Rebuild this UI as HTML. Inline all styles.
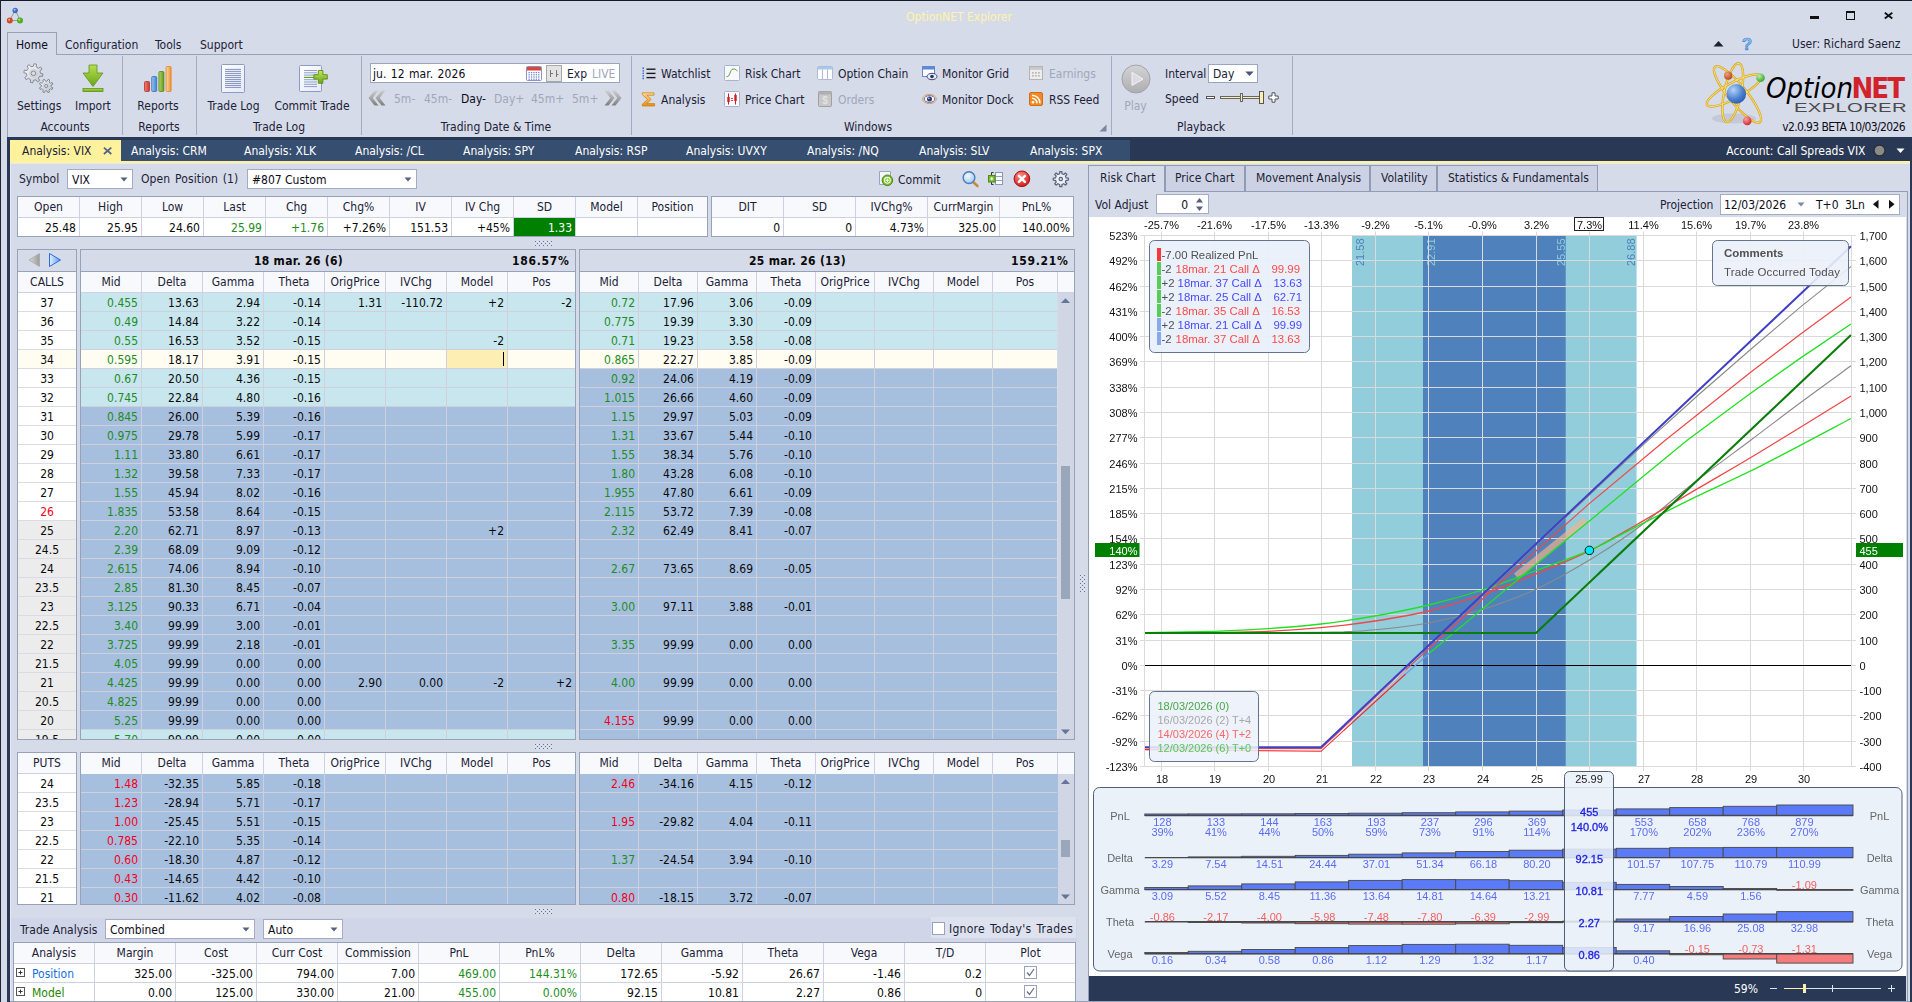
<!DOCTYPE html>
<html lang="en"><head><meta charset="utf-8"><title>OptionNET Explorer</title><style>
html,body{margin:0;padding:0;}
body{width:1912px;height:1002px;overflow:hidden;background:#d6dbe9;position:relative;font-family:"DejaVu Sans Condensed","Liberation Sans",sans-serif;font-size:12px;color:#1b2236;}
#app{position:absolute;left:0;top:0;width:1912px;height:1002px;overflow:hidden;background:#d6dbe9;}
.b{position:absolute;display:block;}
.t{position:absolute;white-space:pre;display:block;}
svg{overflow:visible;}
#frame{position:absolute;left:0;top:0;width:1911px;height:1001px;border-top:1px solid #151a26;border-left:1px solid #1d2435;pointer-events:none;}
</style></head><body><div id="app">
<span class="t" style="left:809px;width:300px;text-align:center;top:10px;line-height:14px;color:#fff3a8;">OptionNET Explorer</span>
<svg class="b" style="left:6px;top:7px" width="18" height="18" viewBox="0 0 18 18"><line x1="9.2" y1="3" x2="4" y2="13" stroke="#888" stroke-width="0.8"/><line x1="9.2" y1="3" x2="14" y2="13" stroke="#888" stroke-width="0.8"/><line x1="4" y1="13.5" x2="14" y2="13.5" stroke="#888" stroke-width="0.8"/>
<circle cx="9.2" cy="3.5" r="2.7" fill="#3f6fc4"/><circle cx="8.6" cy="2.8" r="1" fill="#a9c4f0"/>
<circle cx="3.8" cy="13.6" r="3" fill="#cf4b26"/><circle cx="3.1" cy="12.7" r="1" fill="#f0a890"/>
<circle cx="14" cy="13.6" r="3" fill="#4fae22"/><circle cx="13.3" cy="12.7" r="1" fill="#b4e890"/></svg>
<div class="b" style="left:1810px;top:16px;width:9px;height:3.4px;background:#111;"></div>
<div class="b" style="left:1846px;top:11px;width:9px;height:9px;border:1px solid #111;border-top:2px solid #111;box-sizing:border-box;"></div>
<svg class="b" style="left:1884px;top:11px" width="10" height="10" viewBox="0 0 10 10"><path d="M0.8 1.8 L8.3 7.6 M8.3 1.8 L0.8 7.6" stroke="#111" stroke-width="1.9" fill="none"/></svg>
<div class="b" style="left:7px;top:54px;width:1905px;height:1px;background:#97a2bb;"></div>
<div class="b" style="left:7px;top:32px;width:50px;height:23px;border:1px solid #97a2bb;border-bottom:none;box-sizing:border-box;background:#d6dbe9;"></div>
<span class="t" style="left:16px;top:38px;line-height:14px;color:#0c0c18;">Home</span>
<span class="t" style="left:65px;top:38px;line-height:14px;color:#1b2236;">Configuration</span>
<span class="t" style="left:155px;top:38px;line-height:14px;color:#1b2236;">Tools</span>
<span class="t" style="left:200px;top:38px;line-height:14px;color:#1b2236;">Support</span>
<div class="b" style="left:7px;top:55px;width:1px;height:82px;background:#97a2bb;"></div>
<svg class="b" style="left:1713px;top:40px" width="11" height="7" viewBox="0 0 11 7"><path d="M0.5 6.5 L5.5 1 L10.5 6.5 Z" fill="#1b2236"/></svg>
<svg class="b" style="left:1740px;top:35px" width="14" height="18" viewBox="0 0 14 18"><defs><linearGradient id="gq" x1="0" y1="0" x2="0" y2="1"><stop offset="0" stop-color="#a8d4fa"/><stop offset="1" stop-color="#4a94e0"/></linearGradient></defs><text x="7" y="15" font-size="17" font-weight="bold" text-anchor="middle" fill="url(#gq)" stroke="#3f86d2" stroke-width="0.6" font-family="Liberation Sans, sans-serif">?</text></svg>
<span class="t" style="left:1792px;top:37px;line-height:14px;color:#1b2236;">User: Richard Saenz</span>
<div class="b" style="left:122px;top:56px;width:1px;height:79px;background:#a3abc2;"></div>
<div class="b" style="left:196px;top:56px;width:1px;height:79px;background:#a3abc2;"></div>
<div class="b" style="left:361px;top:56px;width:1px;height:79px;background:#a3abc2;"></div>
<div class="b" style="left:631px;top:56px;width:1px;height:79px;background:#a3abc2;"></div>
<div class="b" style="left:1111px;top:56px;width:1px;height:79px;background:#a3abc2;"></div>
<div class="b" style="left:1292px;top:56px;width:1px;height:79px;background:#a3abc2;"></div>
<svg class="b" style="left:21px;top:61px" width="36" height="36" viewBox="0 0 36 36"><defs><linearGradient id="gg" x1="0" y1="0" x2="1" y2="1"><stop offset="0" stop-color="#ffffff"/><stop offset="1" stop-color="#bfc3cc"/></linearGradient></defs><path d="M19.40 12.22 L21.98 12.94 L21.47 15.44 L18.81 15.10 L17.41 17.19 L18.72 19.52 L16.59 20.94 L14.95 18.82 L12.48 19.30 L11.76 21.88 L9.26 21.37 L9.60 18.71 L7.51 17.31 L5.18 18.62 L3.76 16.49 L5.88 14.85 L5.40 12.38 L2.82 11.66 L3.33 9.16 L5.99 9.50 L7.39 7.41 L6.08 5.08 L8.21 3.66 L9.85 5.78 L12.32 5.30 L13.04 2.72 L15.54 3.23 L15.20 5.89 L17.29 7.29 L19.62 5.98 L21.04 8.11 L18.92 9.75 Z" fill="url(#gg)" stroke="#7d828e" stroke-width="0.9" stroke-linejoin="round"/><circle cx="12.4" cy="12.3" r="3.9" fill="none" stroke="#c9ccd4" stroke-width="1"/><circle cx="12.4" cy="12.3" r="2.3" fill="#d6dbe9" stroke="#7d828e" stroke-width="0.9"/><path d="M30.01 25.92 L31.86 26.82 L31.14 28.51 L29.21 27.82 L27.96 29.05 L28.62 30.99 L26.92 31.68 L26.05 29.83 L24.28 29.81 L23.38 31.66 L21.69 30.94 L22.38 29.01 L21.15 27.76 L19.21 28.42 L18.52 26.72 L20.37 25.85 L20.39 24.08 L18.54 23.18 L19.26 21.49 L21.19 22.18 L22.44 20.95 L21.78 19.01 L23.48 18.32 L24.35 20.17 L26.12 20.19 L27.02 18.34 L28.71 19.06 L28.02 20.99 L29.25 22.24 L31.19 21.58 L31.88 23.28 L30.03 24.15 Z" fill="url(#gg)" stroke="#7d828e" stroke-width="0.9" stroke-linejoin="round"/><circle cx="25.2" cy="25.0" r="3.2" fill="none" stroke="#c9ccd4" stroke-width="1"/><circle cx="25.2" cy="25.0" r="1.6" fill="#d6dbe9" stroke="#7d828e" stroke-width="0.9"/></svg>
<span class="t" style="left:17px;top:99px;line-height:14px;color:#1b2236;">Settings</span>
<svg class="b" style="left:81px;top:63px" width="24" height="31" viewBox="0 0 24 31"><defs><linearGradient id="ga" x1="0" y1="0" x2="0" y2="1"><stop offset="0" stop-color="#b5e04a"/><stop offset="1" stop-color="#6aa51a"/></linearGradient></defs>
<path d="M8 2 H16 V10 H22 L12 23.5 L2 10 H8 Z" fill="url(#ga)" stroke="#5e9414" stroke-width="0.8"/><rect x="2" y="25.5" width="20" height="3" fill="url(#ga)" stroke="#5e9414" stroke-width="0.8"/></svg>
<span class="t" style="left:75px;top:99px;line-height:14px;color:#1b2236;">Import</span>
<span class="t" style="left:-85px;width:300px;text-align:center;top:120px;line-height:14px;color:#1b2236;">Accounts</span>
<svg class="b" style="left:142px;top:64px" width="30" height="30" viewBox="0 0 30 30"><defs>
<linearGradient id="b1" x1="0" x2="1"><stop offset="0" stop-color="#f08070"/><stop offset="1" stop-color="#c83a30"/></linearGradient>
<linearGradient id="b2" x1="0" x2="1"><stop offset="0" stop-color="#9cc8f4"/><stop offset="1" stop-color="#3f7fcf"/></linearGradient>
<linearGradient id="b3" x1="0" x2="1"><stop offset="0" stop-color="#b4d860"/><stop offset="1" stop-color="#5f961c"/></linearGradient>
<linearGradient id="b4" x1="0" x2="1"><stop offset="0" stop-color="#ffd9a0"/><stop offset="1" stop-color="#f09030"/></linearGradient></defs>
<rect x="2.5" y="17.5" width="5" height="10" rx="1" fill="url(#b1)" stroke="#b83228" stroke-width="0.8"/>
<rect x="9.7" y="12.5" width="5" height="15" rx="1" fill="url(#b2)" stroke="#3a70b8" stroke-width="0.8"/>
<rect x="16.9" y="7.5" width="5" height="20" rx="1" fill="url(#b3)" stroke="#56881a" stroke-width="0.8"/>
<rect x="24.1" y="2.5" width="5" height="25" rx="1" fill="url(#b4)" stroke="#e08428" stroke-width="0.8"/></svg>
<span class="t" style="left:8px;width:300px;text-align:center;top:99px;line-height:14px;color:#1b2236;">Reports</span>
<span class="t" style="left:9px;width:300px;text-align:center;top:120px;line-height:14px;color:#1b2236;">Reports</span>
<svg class="b" style="left:220px;top:63px" width="26" height="31" viewBox="0 0 26 31"><defs><linearGradient id="gpg2" x1="0" y1="0" x2="1" y2="1"><stop offset="0" stop-color="#ffffff"/><stop offset="1" stop-color="#e4e9f5"/></linearGradient></defs><rect x="1.5" y="1.5" width="23" height="28" rx="1" fill="url(#gpg2)" stroke="#8c9ac8" stroke-width="1"/><line x1="5" x2="21" y1="6.4" y2="6.4" stroke="#7484b8" stroke-width="0.9"/><line x1="5" x2="21" y1="8.4" y2="8.4" stroke="#7484b8" stroke-width="0.9"/><line x1="5" x2="21" y1="10.4" y2="10.4" stroke="#7484b8" stroke-width="0.9"/><line x1="5" x2="21" y1="12.4" y2="12.4" stroke="#7484b8" stroke-width="0.9"/><line x1="5" x2="21" y1="14.4" y2="14.4" stroke="#7484b8" stroke-width="0.9"/><line x1="5" x2="21" y1="16.4" y2="16.4" stroke="#7484b8" stroke-width="0.9"/><line x1="5" x2="21" y1="18.4" y2="18.4" stroke="#7484b8" stroke-width="0.9"/><line x1="5" x2="21" y1="20.4" y2="20.4" stroke="#7484b8" stroke-width="0.9"/><line x1="5" x2="21" y1="22.4" y2="22.4" stroke="#7484b8" stroke-width="0.9"/><line x1="5" x2="21" y1="24.4" y2="24.4" stroke="#7484b8" stroke-width="0.9"/></svg>
<span class="t" style="left:83.5px;width:300px;text-align:center;top:99px;line-height:14px;color:#1b2236;">Trade Log</span>
<svg class="b" style="left:296px;top:63px" width="34" height="31" viewBox="0 0 34 31"><defs><linearGradient id="gpg" x1="0" y1="0" x2="1" y2="1"><stop offset="0" stop-color="#ffffff"/><stop offset="1" stop-color="#e4e9f5"/></linearGradient><linearGradient id="gpl" x1="0" y1="0" x2="0" y2="1"><stop offset="0" stop-color="#c4e860"/><stop offset="1" stop-color="#68a418"/></linearGradient></defs><rect x="3.5" y="2.5" width="22" height="26" rx="1" fill="url(#gpg)" stroke="#8c9ac8" stroke-width="1"/><line x1="8" x2="21" y1="7.5" y2="7.5" stroke="#8494c4" stroke-width="0.9"/><line x1="8" x2="21" y1="9.8" y2="9.8" stroke="#8494c4" stroke-width="0.9"/><line x1="8" x2="21" y1="12.1" y2="12.1" stroke="#8494c4" stroke-width="0.9"/><line x1="8" x2="21" y1="16.7" y2="16.7" stroke="#8494c4" stroke-width="0.9"/><line x1="8" x2="21" y1="19.0" y2="19.0" stroke="#8494c4" stroke-width="0.9"/><line x1="8" x2="21" y1="21.3" y2="21.3" stroke="#8494c4" stroke-width="0.9"/><line x1="8" x2="21" y1="23.6" y2="23.6" stroke="#8494c4" stroke-width="0.9"/><line x1="8" x2="18" y1="14.4" y2="14.4" stroke="#58a010" stroke-width="1.1"/><path d="M22.3 7.5 h4.6 v4.2 h4.4 v4.4 h-4.4 v4.2 h-4.6 v-4.2 h-4.4 v-4.4 h4.4 z" fill="url(#gpl)" stroke="#5a9010" stroke-width="0.9" stroke-linejoin="round"/></svg>
<span class="t" style="left:162px;width:300px;text-align:center;top:99px;line-height:14px;color:#1b2236;">Commit Trade</span>
<span class="t" style="left:129px;width:300px;text-align:center;top:120px;line-height:14px;color:#1b2236;">Trade Log</span>
<div class="b" style="left:370px;top:63px;width:250px;height:20px;background:#fff;border:1px solid #9aa5c0;box-sizing:border-box;"></div>
<span class="t" style="left:373px;top:67px;line-height:14px;color:#0c0c18;word-spacing:0.8px;letter-spacing:0.08px;">ju. 12 mar. 2026</span>
<svg class="b" style="left:526px;top:66px" width="16" height="15" viewBox="0 0 16 15"><rect x="0.5" y="0.5" width="15" height="14" rx="1" fill="#fff" stroke="#8a96c0" stroke-width="1"/><rect x="1" y="1" width="14" height="3.5" fill="#d8473a"/>
<rect x="2.5" y="6.0" width="1.3" height="1.2" fill="#6b7fd0"/><rect x="4.9" y="6.0" width="1.3" height="1.2" fill="#6b7fd0"/><rect x="7.3" y="6.0" width="1.3" height="1.2" fill="#6b7fd0"/><rect x="9.7" y="6.0" width="1.3" height="1.2" fill="#6b7fd0"/><rect x="12.1" y="6.0" width="1.3" height="1.2" fill="#6b7fd0"/><rect x="2.5" y="8.2" width="1.3" height="1.2" fill="#6b7fd0"/><rect x="4.9" y="8.2" width="1.3" height="1.2" fill="#6b7fd0"/><rect x="7.3" y="8.2" width="1.3" height="1.2" fill="#6b7fd0"/><rect x="9.7" y="8.2" width="1.3" height="1.2" fill="#6b7fd0"/><rect x="12.1" y="8.2" width="1.3" height="1.2" fill="#6b7fd0"/><rect x="2.5" y="10.4" width="1.3" height="1.2" fill="#6b7fd0"/><rect x="4.9" y="10.4" width="1.3" height="1.2" fill="#6b7fd0"/><rect x="7.3" y="10.4" width="1.3" height="1.2" fill="#6b7fd0"/><rect x="9.7" y="10.4" width="1.3" height="1.2" fill="#6b7fd0"/><rect x="12.1" y="10.4" width="1.3" height="1.2" fill="#6b7fd0"/><rect x="2.5" y="12.6" width="1.3" height="1.2" fill="#6b7fd0"/><rect x="4.9" y="12.6" width="1.3" height="1.2" fill="#6b7fd0"/><rect x="7.3" y="12.6" width="1.3" height="1.2" fill="#6b7fd0"/><rect x="9.7" y="12.6" width="1.3" height="1.2" fill="#6b7fd0"/><rect x="12.1" y="12.6" width="1.3" height="1.2" fill="#6b7fd0"/></svg>
<div class="b" style="left:546px;top:65px;width:16px;height:17px;background:#e3e3e3;border:1px solid #a8a8a8;box-sizing:border-box;"></div>
<svg class="b" style="left:546px;top:65px" width="16" height="17" viewBox="0 0 16 17"><path d="M4.5 5 V12 M4.5 8.5 H7 M10.5 5 V12 M10.5 9.5 H12.5" stroke="#777" stroke-width="1" fill="none"/></svg>
<span class="t" style="left:567px;top:67px;line-height:14px;color:#1b2236;">Exp</span>
<span class="t" style="left:592px;top:67px;line-height:14px;color:#a0a7ba;">LIVE</span>
<svg class="b" style="left:368px;top:89px" width="18" height="18" viewBox="0 0 18 18"><defs><linearGradient id="gc" x1="0" y1="0" x2="0" y2="1"><stop offset="0" stop-color="#cfcfcf"/><stop offset="1" stop-color="#7f7f7f"/></linearGradient></defs><path d="M6.5 1.5 L0.5 9 L6.5 16.5 L10.5 16.5 L4.7 9 L10.5 1.5 Z M13.5 1.5 L7.5 9 L13.5 16.5 L17.5 16.5 L11.7 9 L17.5 1.5 Z" fill="url(#gc)"/></svg>
<svg class="b" style="left:604px;top:89px" width="18" height="18" viewBox="0 0 18 18"><path d="M11.5 1.5 L17.5 9 L11.5 16.5 L7.5 16.5 L13.3 9 L7.5 1.5 Z M4.5 1.5 L10.5 9 L4.5 16.5 L0.5 16.5 L6.3 9 L0.5 1.5 Z" fill="url(#gc)"/></svg>
<span class="t" style="left:394px;top:92px;line-height:14px;color:#a0a7ba;">5m-</span>
<span class="t" style="left:424px;top:92px;line-height:14px;color:#a0a7ba;">45m-</span>
<span class="t" style="left:461px;top:92px;line-height:14px;color:#0c0c18;">Day-</span>
<span class="t" style="left:494px;top:92px;line-height:14px;color:#a0a7ba;">Day+</span>
<span class="t" style="left:531px;top:92px;line-height:14px;color:#a0a7ba;">45m+</span>
<span class="t" style="left:572px;top:92px;line-height:14px;color:#a0a7ba;">5m+</span>
<span class="t" style="left:346px;width:300px;text-align:center;top:120px;line-height:14px;color:#1b2236;">Trading Date &amp; Time</span>
<svg class="b" style="left:641px;top:67px" width="16" height="13" viewBox="0 0 16 13"><circle cx="2.2" cy="1.2" r="0.85" fill="#3a6cd0"/><circle cx="2.2" cy="3.8" r="0.85" fill="#3a6cd0"/><circle cx="2.2" cy="6.3" r="0.85" fill="#3a6cd0"/><circle cx="2.2" cy="8.8" r="0.85" fill="#3a6cd0"/><circle cx="2.2" cy="11.4" r="0.85" fill="#3a6cd0"/><line x1="5.5" x2="14.5" y1="2.2" y2="2.2" stroke="#1a1a1a" stroke-width="1.4"/><line x1="5.5" x2="14.5" y1="6.4" y2="6.4" stroke="#1a1a1a" stroke-width="1.4"/><line x1="5.5" x2="14.5" y1="10.6" y2="10.6" stroke="#1a1a1a" stroke-width="1.4"/></svg>
<span class="t" style="left:661px;top:67px;line-height:14px;color:#1b2236;">Watchlist</span>
<svg class="b" style="left:641px;top:91px" width="16" height="17" viewBox="0 0 16 17"><defs><linearGradient id="gs" x1="0" y1="0" x2="0" y2="1"><stop offset="0" stop-color="#ffd890"/><stop offset="0.55" stop-color="#f8b040"/><stop offset="1" stop-color="#e88c18"/></linearGradient></defs><path d="M1.3 1.8 H13 V4.2 H5.8 L10.2 8.4 L5.8 12.6 H13.6 V15 H1.3 V13.2 L6.6 8.4 L1.3 3.6 Z" fill="url(#gs)" stroke="#cc7c14" stroke-width="0.7"/></svg>
<span class="t" style="left:661px;top:93px;line-height:14px;color:#1b2236;">Analysis</span>
<svg class="b" style="left:724px;top:65px" width="16" height="16" viewBox="0 0 16 16"><rect x="0.5" y="0.5" width="15" height="15" rx="1" fill="#f8f9fd" stroke="#a8b2d0"/><path d="M2.5 11.5 C6 13 6 4 9 4 S 12 5 13.5 6" stroke="#5a9a30" stroke-width="1" fill="none"/></svg>
<span class="t" style="left:745px;top:67px;line-height:14px;color:#1b2236;">Risk Chart</span>
<svg class="b" style="left:724px;top:91px" width="16" height="16" viewBox="0 0 16 16"><rect x="0.5" y="0.5" width="15" height="15" rx="1" fill="#f8f9fd" stroke="#a8b2d0"/><path d="M4.5 2.5 V13.5 M11.5 2.5 V13.5" stroke="#c02020" stroke-width="1"/><rect x="3.3" y="6" width="2.4" height="5" fill="#d02020"/><rect x="10.3" y="4" width="2.4" height="6" fill="#d02020"/><path d="M7 7.5 h2 M7 9.5 h2" stroke="#c02020" stroke-width="0.8"/></svg>
<span class="t" style="left:745px;top:93px;line-height:14px;color:#1b2236;">Price Chart</span>
<svg class="b" style="left:817px;top:66px" width="16" height="15" viewBox="0 0 16 15"><rect x="0.5" y="0.5" width="15" height="13" rx="1" fill="#fdfdff" stroke="#b0bad8"/><rect x="1" y="1" width="14" height="2.5" fill="#a8c8ee"/><path d="M5.5 3.5 V13 M10.5 3.5 V13" stroke="#b0bad8"/></svg>
<span class="t" style="left:838px;top:67px;line-height:14px;color:#1b2236;">Option Chain</span>
<svg class="b" style="left:818px;top:91px" width="14" height="16" viewBox="0 0 14 16"><rect x="0.5" y="0.5" width="13" height="15" rx="1" fill="#c8c8c8" stroke="#a0a0a0"/><rect x="0.5" y="0.5" width="13" height="3" fill="#b0b0b0"/><text x="7" y="12.8" font-size="10" font-weight="bold" text-anchor="middle" fill="#e2e2e2" font-family="Liberation Sans, sans-serif">$</text></svg>
<span class="t" style="left:838px;top:93px;line-height:14px;color:#a0a7ba;">Orders</span>
<svg class="b" style="left:922px;top:66px" width="16" height="15" viewBox="0 0 16 15"><rect x="0.5" y="0.5" width="12" height="10" fill="#fdfdff" stroke="#6a88c8"/><rect x="1" y="1" width="11" height="2.5" fill="#5a8ad8"/><ellipse cx="10" cy="10.5" rx="5" ry="3.2" fill="#e8ecf8" stroke="#333a60" stroke-width="0.9"/><circle cx="10" cy="10.5" r="1.8" fill="#28346a"/></svg>
<span class="t" style="left:942px;top:67px;line-height:14px;color:#1b2236;">Monitor Grid</span>
<svg class="b" style="left:922px;top:93px" width="16" height="12" viewBox="0 0 16 12"><ellipse cx="7.5" cy="6" rx="6.8" ry="4.6" fill="#eef0f8" stroke="#d89050" stroke-width="0.9"/><ellipse cx="7.5" cy="6" rx="5.4" ry="3.4" fill="#f6f7fb" stroke="#50588a" stroke-width="0.9"/><circle cx="7.5" cy="6" r="2.5" fill="#303c70"/><circle cx="6.8" cy="5.2" r="0.8" fill="#c8d0f0"/></svg>
<span class="t" style="left:942px;top:93px;line-height:14px;color:#1b2236;">Monitor Dock</span>
<svg class="b" style="left:1029px;top:66px" width="15" height="15" viewBox="0 0 15 15"><rect x="0.5" y="0.5" width="13" height="13" fill="#ededed" stroke="#b4b4b4"/><rect x="1" y="1" width="12" height="2.8" fill="#c8c8c8"/><rect x="3" y="6" width="1.8" height="1.6" fill="#b8b8b8"/><rect x="6" y="6" width="1.8" height="1.6" fill="#b8b8b8"/><rect x="9" y="6" width="1.8" height="1.6" fill="#b8b8b8"/><rect x="3" y="9" width="1.8" height="1.6" fill="#b8b8b8"/><rect x="6" y="9" width="1.8" height="1.6" fill="#b8b8b8"/><rect x="9" y="9" width="1.8" height="1.6" fill="#b8b8b8"/></svg>
<span class="t" style="left:1049px;top:67px;line-height:14px;color:#a0a7ba;">Earnings</span>
<svg class="b" style="left:1029px;top:92px" width="15" height="15" viewBox="0 0 15 15"><rect x="0.5" y="0.5" width="13" height="13" rx="1.5" fill="#f08a24" stroke="#d86c10"/><circle cx="4" cy="10.3" r="1.3" fill="#fff"/><path d="M3 6.2 A5 5 0 0 1 8 11.2 M3 3.2 A8 8 0 0 1 11 11.2" stroke="#fff" stroke-width="1.5" fill="none"/></svg>
<span class="t" style="left:1049px;top:93px;line-height:14px;color:#1b2236;">RSS Feed</span>
<span class="t" style="left:718px;width:300px;text-align:center;top:120px;line-height:14px;color:#1b2236;">Windows</span>
<svg class="b" style="left:1099px;top:124px" width="8" height="8" viewBox="0 0 8 8"><path d="M7.5 0.5 V7.5 H0.5 Z" fill="#7a86a4"/></svg>
<svg class="b" style="left:1121px;top:64px" width="30" height="30" viewBox="0 0 30 30"><defs><linearGradient id="gp" x1="0" y1="0" x2="0" y2="1"><stop offset="0" stop-color="#d4d4d6"/><stop offset="1" stop-color="#aeaeb2"/></linearGradient></defs><circle cx="15" cy="15" r="14" fill="url(#gp)" stroke="#a2a2a8"/><path d="M11 8.5 L22 15 L11 21.5 Z" fill="#dcdcde" stroke="#f4f4f4" stroke-width="1"/></svg>
<span class="t" style="left:985.5px;width:300px;text-align:center;top:99px;line-height:14px;color:#a0a7ba;">Play</span>
<span class="t" style="left:1165px;top:67px;line-height:14px;color:#1b2236;">Interval</span>
<div class="b" style="left:1208px;top:64px;width:50px;height:19px;background:#fff;border:1px solid #9aa5c0;box-sizing:border-box;"></div>
<span class="t" style="left:1213px;top:67px;line-height:14px;color:#1b2236;">Day</span>
<svg class="b" style="left:1245px;top:71px" width="10" height="6" viewBox="0 0 10 6"><path d="M0.3 0.5 H8.7 L4.5 5 Z" fill="#4a5678"/></svg>
<span class="t" style="left:1165px;top:92px;line-height:14px;color:#1b2236;">Speed</span>
<div class="b" style="left:1206px;top:96px;width:9px;height:3px;background:#fff;border:1px solid #555;box-sizing:border-box;"></div>
<div class="b" style="left:1220px;top:96px;width:41px;height:3px;background:#fbefb0;border:1px solid #666;box-sizing:border-box;"></div>
<div class="b" style="left:1240px;top:93px;width:3px;height:9px;background:#fbefb0;border:1px solid #666;box-sizing:border-box;"></div>
<div class="b" style="left:1259px;top:91px;width:5px;height:13px;background:#fbefb0;border:1px solid #555;box-sizing:border-box;"></div>
<svg class="b" style="left:1268px;top:92px" width="12" height="12" viewBox="0 0 12 12"><path d="M4 0.8 H7 V4 H10.2 V7 H7 V10.2 H4 V7 H0.8 V4 H4 Z" fill="#fff" stroke="#444" stroke-width="0.9"/></svg>
<span class="t" style="left:1051px;width:300px;text-align:center;top:120px;line-height:14px;color:#1b2236;">Playback</span>
<svg class="b" style="left:1700px;top:58px" width="70" height="76" viewBox="0 0 70 76"><defs>
<radialGradient id="lb" cx="0.35" cy="0.3" r="0.8"><stop offset="0" stop-color="#b4d4fa"/><stop offset="0.6" stop-color="#4a7fd0"/><stop offset="1" stop-color="#2a55a8"/></radialGradient>
<radialGradient id="lr" cx="0.35" cy="0.3" r="0.8"><stop offset="0" stop-color="#f8a0a0"/><stop offset="1" stop-color="#d01828"/></radialGradient>
<radialGradient id="lg" cx="0.35" cy="0.3" r="0.8"><stop offset="0" stop-color="#b8f0a0"/><stop offset="1" stop-color="#2e9a1a"/></radialGradient>
<radialGradient id="lo" cx="0.35" cy="0.3" r="0.8"><stop offset="0" stop-color="#f0a080"/><stop offset="1" stop-color="#b04010"/></radialGradient>
</defs>
<ellipse cx="34" cy="60.5" rx="22" ry="5" fill="#b4b8c6" opacity="0.5"/>
<g fill="none" stroke="#d9a81e" stroke-width="2.4">
<ellipse cx="37.5" cy="36.4" rx="35.6" ry="9" transform="rotate(50.8 37.5 36.4)"/>
<ellipse cx="32.75" cy="34.7" rx="30" ry="8.5" transform="rotate(102 32.75 34.7)"/>
<ellipse cx="34" cy="32.4" rx="30.6" ry="8" transform="rotate(-28 34 32.4)"/>
</g>
<g fill="none" stroke="#f7e27e" stroke-width="0.9">
<ellipse cx="37.5" cy="36.4" rx="35.6" ry="9" transform="rotate(50.8 37.5 36.4)"/>
<ellipse cx="32.75" cy="34.7" rx="30" ry="8.5" transform="rotate(102 32.75 34.7)"/>
<ellipse cx="34" cy="32.4" rx="30.6" ry="8" transform="rotate(-28 34 32.4)"/>
</g>
<circle cx="36.3" cy="35.9" r="9.8" fill="url(#lb)"/>
<circle cx="28.2" cy="17.7" r="4.1" fill="url(#lo)"/>
<circle cx="60.5" cy="19.8" r="4.3" fill="url(#lg)"/>
<circle cx="47.2" cy="62.9" r="4.3" fill="url(#lr)"/></svg>
<span class="t" style="left:1766px;top:69.5px;line-height:36px;font-family:'DejaVu Sans Condensed','Liberation Sans',sans-serif;font-size:29px;font-style:italic;color:#000;letter-spacing:0px">Option</span>
<span class="t" style="left:1851.5px;top:69.5px;line-height:36px;font-family:'DejaVu Sans Condensed','Liberation Sans',sans-serif;font-size:29px;font-weight:bold;color:#d2232a;letter-spacing:-2px">NET</span>
<span class="t" style="left:1794px;top:101px;line-height:14px;font-family:'Liberation Sans',sans-serif;font-size:12.5px;color:#4a4a4a;transform:scaleX(1.62);transform-origin:0 0;letter-spacing:0.2px">EXPLORER</span>
<span class="t" style="right:7px;top:120px;line-height:14px;color:#0c0c18;letter-spacing:-0.62px;">v2.0.93 BETA 10/03/2026</span>
<div class="b" style="left:7px;top:137px;width:1905px;height:27px;background:#293955;"></div>
<div class="b" style="left:10px;top:140px;width:1120px;height:21px;background:#364e6f;"></div>
<div class="b" style="left:10px;top:140px;width:111px;height:21px;background:#fff29d;"></div>
<div class="b" style="left:10px;top:161px;width:1900px;height:2px;background:#fff29d;"></div>
<span class="t" style="left:22px;top:144px;line-height:14px;color:#1b2236;">Analysis: VIX</span>
<svg class="b" style="left:103px;top:146px" width="10" height="10" viewBox="0 0 10 10"><path d="M0.9 1.6 L8.3 8.0 M8.3 1.6 L0.9 8.0" stroke="#55648a" stroke-width="1.8"/></svg>
<span class="t" style="left:131px;top:144px;line-height:14px;color:#fff;">Analysis: CRM</span>
<span class="t" style="left:244px;top:144px;line-height:14px;color:#fff;">Analysis: XLK</span>
<span class="t" style="left:355px;top:144px;line-height:14px;color:#fff;">Analysis: /CL</span>
<span class="t" style="left:463px;top:144px;line-height:14px;color:#fff;">Analysis: SPY</span>
<span class="t" style="left:575px;top:144px;line-height:14px;color:#fff;">Analysis: RSP</span>
<span class="t" style="left:686px;top:144px;line-height:14px;color:#fff;">Analysis: UVXY</span>
<span class="t" style="left:807px;top:144px;line-height:14px;color:#fff;">Analysis: /NQ</span>
<span class="t" style="left:919px;top:144px;line-height:14px;color:#fff;">Analysis: SLV</span>
<span class="t" style="left:1030px;top:144px;line-height:14px;color:#fff;">Analysis: SPX</span>
<span class="t" style="right:46.5px;top:144px;line-height:14px;color:#fff;">Account: Call Spreads VIX</span>
<svg class="b" style="left:1873px;top:144px" width="13" height="13" viewBox="0 0 13 13"><circle cx="6.5" cy="6.5" r="5.4" fill="#8a8a8a" stroke="#2a2a2a" stroke-width="1.1"/></svg>
<svg class="b" style="left:1896px;top:148px" width="10" height="6" viewBox="0 0 10 6"><path d="M0.5 0.5 H8.5 L4.5 5 Z" fill="#fff"/></svg>
<div class="b" style="left:10px;top:163px;width:1900px;height:1px;background:#e6e9f2;"></div>
<div class="b" style="left:10px;top:163px;width:1px;height:839px;background:#e6e9f2;"></div>
<div class="b" style="left:7px;top:163px;width:3px;height:839px;background:#293955;"></div>
<div class="b" style="left:1910px;top:163px;width:2px;height:839px;background:#293955;"></div>
<span class="t" style="left:19px;top:172px;line-height:14px;color:#1b2236;">Symbol</span>
<div class="b" style="left:67px;top:169px;width:66px;height:20px;background:#fff;border:1px solid #a3acc4;box-sizing:border-box;"></div>
<span class="t" style="left:72px;top:173px;line-height:14px;color:#0c0c18;">VIX</span>
<svg class="b" style="left:120px;top:177px" width="9" height="5" viewBox="0 0 9 5"><path d="M0.5 0.5 H7.5 L4 4.5 Z" fill="#55607e"/></svg>
<span class="t" style="left:141px;top:172px;line-height:14px;color:#1b2236;word-spacing:1.2px;letter-spacing:0.12px;">Open Position (1)</span>
<div class="b" style="left:247px;top:169px;width:170px;height:20px;background:#fff;border:1px solid #a3acc4;box-sizing:border-box;"></div>
<span class="t" style="left:252px;top:173px;line-height:14px;color:#0c0c18;">#807 Custom</span>
<svg class="b" style="left:404px;top:177px" width="9" height="5" viewBox="0 0 9 5"><path d="M0.5 0.5 H7.5 L4 4.5 Z" fill="#55607e"/></svg>
<svg class="b" style="left:878px;top:170px" width="18" height="18" viewBox="0 0 18 18"><path d="M1.5 1.5 H12.5 V14.5 H1.5 Z" fill="#f4f6fc" stroke="#98a4c8"/><circle cx="9.4" cy="10.3" r="5.3" fill="#78bc2c" stroke="#4a8a12"/><circle cx="9.4" cy="10.3" r="2.9" fill="none" stroke="#f4fbe8" stroke-width="1.1"/><path d="M9.4 8.6 V12 M7.7 10.3 H11.1" stroke="#f4fbe8" stroke-width="1.1"/></svg>
<span class="t" style="left:898px;top:173px;line-height:14px;color:#1b2236;">Commit</span>
<svg class="b" style="left:960px;top:169px" width="20" height="20" viewBox="0 0 20 20"><defs><radialGradient id="mg" cx="0.4" cy="0.35" r="0.7"><stop offset="0" stop-color="#f4faff"/><stop offset="1" stop-color="#9cc8f4"/></radialGradient></defs><path d="M13 13 L17.5 17" stroke="#c88a38" stroke-width="2.6" stroke-linecap="round"/><circle cx="9" cy="8.6" r="5.9" fill="url(#mg)" stroke="#4a7cc0" stroke-width="1.4"/></svg>
<svg class="b" style="left:987px;top:171px" width="17" height="15" viewBox="0 0 17 15"><rect x="8.5" y="1.5" width="7" height="12" fill="#fbfcff" stroke="#8c98b8"/><path d="M8.5 5.5 H15.5 M8.5 9.5 H15.5" stroke="#8c98b8" stroke-width="0.9"/><path d="M6.5 1.5 H4.5 V13.5 H6.5" fill="none" stroke="#333" stroke-width="1"/><rect x="1.5" y="4.5" width="6.5" height="6.5" fill="#7cc030" stroke="#4c8c14"/><path d="M4.75 6.2 V9.3 M3.2 7.75 H6.3" stroke="#fff" stroke-width="1.1"/></svg>
<svg class="b" style="left:1012px;top:169px" width="20" height="20" viewBox="0 0 20 20"><defs><radialGradient id="rx" cx="0.4" cy="0.3" r="0.8"><stop offset="0" stop-color="#ff8a80"/><stop offset="1" stop-color="#cc1010"/></radialGradient></defs><circle cx="9.9" cy="9.8" r="7.8" fill="url(#rx)" stroke="#a80c0c"/><path d="M6.9 6.8 L12.9 12.8 M12.9 6.8 L6.9 12.8" stroke="#fff" stroke-width="2.5" stroke-linecap="round"/></svg>
<svg class="b" style="left:1052px;top:170px" width="18" height="18" viewBox="0 0 18 18"><path d="M14.18 7.94 L16.33 8.09 L16.33 10.11 L14.18 10.26 L13.42 12.08 L14.84 13.71 L13.41 15.14 L11.78 13.72 L9.96 14.48 L9.81 16.63 L7.79 16.63 L7.64 14.48 L5.82 13.72 L4.19 15.14 L2.76 13.71 L4.18 12.08 L3.42 10.26 L1.27 10.11 L1.27 8.09 L3.42 7.94 L4.18 6.12 L2.76 4.49 L4.19 3.06 L5.82 4.48 L7.64 3.72 L7.79 1.57 L9.81 1.57 L9.96 3.72 L11.78 4.48 L13.41 3.06 L14.84 4.49 L13.42 6.12 Z" fill="#eceff5" stroke="#59627a" stroke-width="1.25" stroke-linejoin="round"/><circle cx="8.8" cy="9.1" r="1.7" fill="#d6dbe9" stroke="#59627a" stroke-width="1.1"/></svg>
<div class="b" style="left:17px;top:196px;width:691px;height:41px;background:#fff;border:1px solid #97a2b8;box-sizing:border-box;"></div>
<div class="b" style="left:18px;top:197px;width:689px;height:20px;background:#f8f9fd;"></div>
<div class="b" style="left:18px;top:217px;width:689px;height:1px;background:#cdd1e2;"></div>
<div class="b" style="left:79px;top:197px;width:1px;height:39px;background:#cdd1e2;"></div>
<div class="b" style="left:141px;top:197px;width:1px;height:39px;background:#cdd1e2;"></div>
<div class="b" style="left:203px;top:197px;width:1px;height:39px;background:#cdd1e2;"></div>
<div class="b" style="left:265px;top:197px;width:1px;height:39px;background:#cdd1e2;"></div>
<div class="b" style="left:327px;top:197px;width:1px;height:39px;background:#cdd1e2;"></div>
<div class="b" style="left:389px;top:197px;width:1px;height:39px;background:#cdd1e2;"></div>
<div class="b" style="left:451px;top:197px;width:1px;height:39px;background:#cdd1e2;"></div>
<div class="b" style="left:513px;top:197px;width:1px;height:39px;background:#cdd1e2;"></div>
<div class="b" style="left:575px;top:197px;width:1px;height:39px;background:#cdd1e2;"></div>
<div class="b" style="left:637px;top:197px;width:1px;height:39px;background:#cdd1e2;"></div>
<div class="b" style="left:514px;top:218px;width:61px;height:18px;background:#008000;"></div>
<span class="t" style="left:-101.5px;width:300px;text-align:center;top:200px;line-height:14px;color:#1b2236;">Open</span>
<span class="t" style="right:1836px;top:221px;line-height:14px;color:#0a0a0a;">25.48</span>
<span class="t" style="left:-39.5px;width:300px;text-align:center;top:200px;line-height:14px;color:#1b2236;">High</span>
<span class="t" style="right:1774px;top:221px;line-height:14px;color:#0a0a0a;">25.95</span>
<span class="t" style="left:22.5px;width:300px;text-align:center;top:200px;line-height:14px;color:#1b2236;">Low</span>
<span class="t" style="right:1712px;top:221px;line-height:14px;color:#0a0a0a;">24.60</span>
<span class="t" style="left:84.5px;width:300px;text-align:center;top:200px;line-height:14px;color:#1b2236;">Last</span>
<span class="t" style="right:1650px;top:221px;line-height:14px;color:#1e8c1e;">25.99</span>
<span class="t" style="left:146.5px;width:300px;text-align:center;top:200px;line-height:14px;color:#1b2236;">Chg</span>
<span class="t" style="right:1588px;top:221px;line-height:14px;color:#1e8c1e;">+1.76</span>
<span class="t" style="left:208.5px;width:300px;text-align:center;top:200px;line-height:14px;color:#1b2236;">Chg%</span>
<span class="t" style="right:1526px;top:221px;line-height:14px;color:#0a0a0a;">+7.26%</span>
<span class="t" style="left:270.5px;width:300px;text-align:center;top:200px;line-height:14px;color:#1b2236;">IV</span>
<span class="t" style="right:1464px;top:221px;line-height:14px;color:#0a0a0a;">151.53</span>
<span class="t" style="left:332.5px;width:300px;text-align:center;top:200px;line-height:14px;color:#1b2236;">IV Chg</span>
<span class="t" style="right:1402px;top:221px;line-height:14px;color:#0a0a0a;">+45%</span>
<span class="t" style="left:394.5px;width:300px;text-align:center;top:200px;line-height:14px;color:#1b2236;">SD</span>
<span class="t" style="right:1340px;top:221px;line-height:14px;color:#fff;">1.33</span>
<span class="t" style="left:456.5px;width:300px;text-align:center;top:200px;line-height:14px;color:#1b2236;">Model</span>
<span class="t" style="left:522.5px;width:300px;text-align:center;top:200px;line-height:14px;color:#1b2236;">Position</span>
<div class="b" style="left:711px;top:196px;width:363px;height:41px;background:#fff;border:1px solid #97a2b8;box-sizing:border-box;"></div>
<div class="b" style="left:712px;top:197px;width:361px;height:20px;background:#f8f9fd;"></div>
<div class="b" style="left:712px;top:217px;width:361px;height:1px;background:#cdd1e2;"></div>
<div class="b" style="left:783px;top:197px;width:1px;height:39px;background:#cdd1e2;"></div>
<div class="b" style="left:855px;top:197px;width:1px;height:39px;background:#cdd1e2;"></div>
<div class="b" style="left:927px;top:197px;width:1px;height:39px;background:#cdd1e2;"></div>
<div class="b" style="left:999px;top:197px;width:1px;height:39px;background:#cdd1e2;"></div>
<span class="t" style="left:597.5px;width:300px;text-align:center;top:200px;line-height:14px;color:#1b2236;">DIT</span>
<span class="t" style="right:1132px;top:221px;line-height:14px;color:#0a0a0a;">0</span>
<span class="t" style="left:669.5px;width:300px;text-align:center;top:200px;line-height:14px;color:#1b2236;">SD</span>
<span class="t" style="right:1060px;top:221px;line-height:14px;color:#0a0a0a;">0</span>
<span class="t" style="left:741.5px;width:300px;text-align:center;top:200px;line-height:14px;color:#1b2236;">IVChg%</span>
<span class="t" style="right:988px;top:221px;line-height:14px;color:#0a0a0a;">4.73%</span>
<span class="t" style="left:813.5px;width:300px;text-align:center;top:200px;line-height:14px;color:#1b2236;">CurrMargin</span>
<span class="t" style="right:916px;top:221px;line-height:14px;color:#0a0a0a;">325.00</span>
<span class="t" style="left:886.5px;width:300px;text-align:center;top:200px;line-height:14px;color:#1b2236;">PnL%</span>
<span class="t" style="right:842px;top:221px;line-height:14px;color:#0a0a0a;">140.00%</span>
<svg class="b" style="left:535px;top:241px" width="17" height="5" viewBox="0 0 17 5"><rect x="0" y="0" width="1" height="1" fill="#65749a"/><rect x="4" y="0" width="1" height="1" fill="#65749a"/><rect x="8" y="0" width="1" height="1" fill="#65749a"/><rect x="12" y="0" width="1" height="1" fill="#65749a"/><rect x="16" y="0" width="1" height="1" fill="#65749a"/><rect x="2" y="0" width="1" height="1" fill="#e6e9f2"/><rect x="6" y="0" width="1" height="1" fill="#e6e9f2"/><rect x="10" y="0" width="1" height="1" fill="#e6e9f2"/><rect x="14" y="0" width="1" height="1" fill="#e6e9f2"/><rect x="2" y="2" width="1" height="1" fill="#65749a"/><rect x="6" y="2" width="1" height="1" fill="#65749a"/><rect x="10" y="2" width="1" height="1" fill="#65749a"/><rect x="14" y="2" width="1" height="1" fill="#65749a"/><rect x="0" y="2" width="1" height="1" fill="#e6e9f2"/><rect x="4" y="2" width="1" height="1" fill="#e6e9f2"/><rect x="8" y="2" width="1" height="1" fill="#e6e9f2"/><rect x="12" y="2" width="1" height="1" fill="#e6e9f2"/><rect x="16" y="2" width="1" height="1" fill="#e6e9f2"/><rect x="0" y="4" width="1" height="1" fill="#65749a"/><rect x="4" y="4" width="1" height="1" fill="#65749a"/><rect x="8" y="4" width="1" height="1" fill="#65749a"/><rect x="12" y="4" width="1" height="1" fill="#65749a"/><rect x="16" y="4" width="1" height="1" fill="#65749a"/><rect x="2" y="4" width="1" height="1" fill="#e6e9f2"/><rect x="6" y="4" width="1" height="1" fill="#e6e9f2"/><rect x="10" y="4" width="1" height="1" fill="#e6e9f2"/><rect x="14" y="4" width="1" height="1" fill="#e6e9f2"/></svg>
<div class="b" style="left:17px;top:249px;width:60px;height:491px;background:#fff;border:1px solid #97a2b8;box-sizing:border-box;"></div>
<div class="b" style="left:18px;top:250px;width:58px;height:21px;background:#d6dbe9;"></div>
<div class="b" style="left:18px;top:271px;width:58px;height:1px;background:#97a2b8;"></div>
<div class="b" style="left:18px;top:272px;width:58px;height:20px;background:#f8f9fd;"></div>
<div class="b" style="left:18px;top:292px;width:58px;height:1px;background:#cdd1e2;"></div>
<span class="t" style="left:-103px;width:300px;text-align:center;top:275px;line-height:14px;color:#1b2236;">CALLS</span>
<svg class="b" style="left:27px;top:252px" width="40" height="17" viewBox="0 0 40 17"><defs><linearGradient id="ga1" x1="0" x2="1"><stop offset="0" stop-color="#d8d8d8"/><stop offset="1" stop-color="#9c9c9c"/></linearGradient><linearGradient id="ga2" x1="0" x2="1"><stop offset="0" stop-color="#e4f0ff"/><stop offset="1" stop-color="#5a9af0"/></linearGradient></defs><path d="M12.5 1.5 V14.5 L2 8 Z" fill="url(#ga1)" stroke="#a8a8a8" stroke-width="0.8"/><path d="M22.5 1.5 V14.5 L33.5 8 Z" fill="url(#ga2)" stroke="#2a6ad8" stroke-width="1"/></svg>
<div class="b" style="left:80px;top:249px;width:496px;height:491px;background:#d6dbe9;border:1px solid #97a2b8;box-sizing:border-box;"></div>
<div class="b" style="left:81px;top:271px;width:494px;height:1px;background:#97a2b8;"></div>
<span class="t" style="left:148.5px;width:300px;text-align:center;top:254px;line-height:14px;color:#0a0a0a;font-weight:bold;letter-spacing:0.3px;">18 mar. 26 (6)</span>
<span class="t" style="right:1342.5px;top:254px;line-height:14px;color:#0a0a0a;font-weight:bold;letter-spacing:0.7px;">186.57%</span>
<div class="b" style="left:81px;top:272px;width:494px;height:20px;background:#f8f9fd;"></div>
<div class="b" style="left:141px;top:272px;width:1px;height:20px;background:#cdd1e2;"></div>
<div class="b" style="left:202px;top:272px;width:1px;height:20px;background:#cdd1e2;"></div>
<div class="b" style="left:263px;top:272px;width:1px;height:20px;background:#cdd1e2;"></div>
<div class="b" style="left:324px;top:272px;width:1px;height:20px;background:#cdd1e2;"></div>
<div class="b" style="left:385px;top:272px;width:1px;height:20px;background:#cdd1e2;"></div>
<div class="b" style="left:446px;top:272px;width:1px;height:20px;background:#cdd1e2;"></div>
<div class="b" style="left:507px;top:272px;width:1px;height:20px;background:#cdd1e2;"></div>
<span class="t" style="left:-39.0px;width:300px;text-align:center;top:275px;line-height:14px;color:#1b2236;">Mid</span>
<span class="t" style="left:22.0px;width:300px;text-align:center;top:275px;line-height:14px;color:#1b2236;">Delta</span>
<span class="t" style="left:83.0px;width:300px;text-align:center;top:275px;line-height:14px;color:#1b2236;">Gamma</span>
<span class="t" style="left:144.0px;width:300px;text-align:center;top:275px;line-height:14px;color:#1b2236;">Theta</span>
<span class="t" style="left:205.0px;width:300px;text-align:center;top:275px;line-height:14px;color:#1b2236;">OrigPrice</span>
<span class="t" style="left:266.0px;width:300px;text-align:center;top:275px;line-height:14px;color:#1b2236;">IVChg</span>
<span class="t" style="left:327.0px;width:300px;text-align:center;top:275px;line-height:14px;color:#1b2236;">Model</span>
<span class="t" style="left:391.5px;width:300px;text-align:center;top:275px;line-height:14px;color:#1b2236;">Pos</span>
<div class="b" style="left:81px;top:292px;width:494px;height:1px;background:#cdd1e2;"></div>
<div class="b" style="left:579px;top:249px;width:496px;height:491px;background:#d6dbe9;border:1px solid #97a2b8;box-sizing:border-box;"></div>
<div class="b" style="left:580px;top:271px;width:494px;height:1px;background:#97a2b8;"></div>
<span class="t" style="left:647.5px;width:300px;text-align:center;top:254px;line-height:14px;color:#0a0a0a;font-weight:bold;letter-spacing:0.3px;">25 mar. 26 (13)</span>
<span class="t" style="right:843.5px;top:254px;line-height:14px;color:#0a0a0a;font-weight:bold;letter-spacing:0.7px;">159.21%</span>
<div class="b" style="left:580px;top:272px;width:494px;height:20px;background:#f8f9fd;"></div>
<div class="b" style="left:638px;top:272px;width:1px;height:20px;background:#cdd1e2;"></div>
<div class="b" style="left:697px;top:272px;width:1px;height:20px;background:#cdd1e2;"></div>
<div class="b" style="left:756px;top:272px;width:1px;height:20px;background:#cdd1e2;"></div>
<div class="b" style="left:815px;top:272px;width:1px;height:20px;background:#cdd1e2;"></div>
<div class="b" style="left:874px;top:272px;width:1px;height:20px;background:#cdd1e2;"></div>
<div class="b" style="left:933px;top:272px;width:1px;height:20px;background:#cdd1e2;"></div>
<div class="b" style="left:992px;top:272px;width:1px;height:20px;background:#cdd1e2;"></div>
<div class="b" style="left:1057px;top:272px;width:1px;height:20px;background:#cdd1e2;"></div>
<span class="t" style="left:459.0px;width:300px;text-align:center;top:275px;line-height:14px;color:#1b2236;">Mid</span>
<span class="t" style="left:518.0px;width:300px;text-align:center;top:275px;line-height:14px;color:#1b2236;">Delta</span>
<span class="t" style="left:577.0px;width:300px;text-align:center;top:275px;line-height:14px;color:#1b2236;">Gamma</span>
<span class="t" style="left:636.0px;width:300px;text-align:center;top:275px;line-height:14px;color:#1b2236;">Theta</span>
<span class="t" style="left:695.0px;width:300px;text-align:center;top:275px;line-height:14px;color:#1b2236;">OrigPrice</span>
<span class="t" style="left:754.0px;width:300px;text-align:center;top:275px;line-height:14px;color:#1b2236;">IVChg</span>
<span class="t" style="left:813.0px;width:300px;text-align:center;top:275px;line-height:14px;color:#1b2236;">Model</span>
<span class="t" style="left:875.0px;width:300px;text-align:center;top:275px;line-height:14px;color:#1b2236;">Pos</span>
<span class="t" style="left:916.0px;width:300px;text-align:center;top:275px;line-height:14px;color:#1b2236;"></span>
<div class="b" style="left:580px;top:292px;width:494px;height:1px;background:#cdd1e2;"></div>
<div class="b" style="left:0;top:293px;width:1912px;height:446px;overflow:hidden">
<div class="b" style="left:18px;top:0px;width:58px;height:18px;background:#fff;"></div>
<div class="b" style="left:18px;top:18px;width:58px;height:1px;background:#d9dce6;"></div>
<span class="t" style="left:-103px;width:300px;text-align:center;top:3px;line-height:14px;color:#0a0a0a;">37</span>
<div class="b" style="left:81px;top:0px;width:494px;height:18px;background:#c8e6ee;"></div>
<div class="b" style="left:81px;top:18px;width:494px;height:1px;background:#d0d0dc;"></div>
<div class="b" style="left:580px;top:0px;width:477px;height:18px;background:#c8e6ee;"></div>
<div class="b" style="left:580px;top:18px;width:477px;height:1px;background:#d0d0dc;"></div>
<span class="t" style="right:1774px;top:3px;line-height:14px;color:#1e8c1e;">0.455</span>
<span class="t" style="right:1713px;top:3px;line-height:14px;color:#0a0a0a;">13.63</span>
<span class="t" style="right:1652px;top:3px;line-height:14px;color:#0a0a0a;">2.94</span>
<span class="t" style="right:1591px;top:3px;line-height:14px;color:#0a0a0a;">-0.14</span>
<span class="t" style="right:1530px;top:3px;line-height:14px;color:#0a0a0a;">1.31</span>
<span class="t" style="right:1469px;top:3px;line-height:14px;color:#0a0a0a;">-110.72</span>
<span class="t" style="right:1408px;top:3px;line-height:14px;color:#0a0a0a;">+2</span>
<span class="t" style="right:1340px;top:3px;line-height:14px;color:#0a0a0a;">-2</span>
<span class="t" style="right:1277px;top:3px;line-height:14px;color:#1e8c1e;">0.72</span>
<span class="t" style="right:1218px;top:3px;line-height:14px;color:#0a0a0a;">17.96</span>
<span class="t" style="right:1159px;top:3px;line-height:14px;color:#0a0a0a;">3.06</span>
<span class="t" style="right:1100px;top:3px;line-height:14px;color:#0a0a0a;">-0.09</span>
<div class="b" style="left:18px;top:19px;width:58px;height:18px;background:#fff;"></div>
<div class="b" style="left:18px;top:37px;width:58px;height:1px;background:#d9dce6;"></div>
<span class="t" style="left:-103px;width:300px;text-align:center;top:22px;line-height:14px;color:#0a0a0a;">36</span>
<div class="b" style="left:81px;top:19px;width:494px;height:18px;background:#c8e6ee;"></div>
<div class="b" style="left:81px;top:37px;width:494px;height:1px;background:#d0d0dc;"></div>
<div class="b" style="left:580px;top:19px;width:477px;height:18px;background:#c8e6ee;"></div>
<div class="b" style="left:580px;top:37px;width:477px;height:1px;background:#d0d0dc;"></div>
<span class="t" style="right:1774px;top:22px;line-height:14px;color:#1e8c1e;">0.49</span>
<span class="t" style="right:1713px;top:22px;line-height:14px;color:#0a0a0a;">14.84</span>
<span class="t" style="right:1652px;top:22px;line-height:14px;color:#0a0a0a;">3.22</span>
<span class="t" style="right:1591px;top:22px;line-height:14px;color:#0a0a0a;">-0.14</span>
<span class="t" style="right:1277px;top:22px;line-height:14px;color:#1e8c1e;">0.775</span>
<span class="t" style="right:1218px;top:22px;line-height:14px;color:#0a0a0a;">19.39</span>
<span class="t" style="right:1159px;top:22px;line-height:14px;color:#0a0a0a;">3.30</span>
<span class="t" style="right:1100px;top:22px;line-height:14px;color:#0a0a0a;">-0.09</span>
<div class="b" style="left:18px;top:38px;width:58px;height:18px;background:#fff;"></div>
<div class="b" style="left:18px;top:56px;width:58px;height:1px;background:#d9dce6;"></div>
<span class="t" style="left:-103px;width:300px;text-align:center;top:41px;line-height:14px;color:#0a0a0a;">35</span>
<div class="b" style="left:81px;top:38px;width:494px;height:18px;background:#c8e6ee;"></div>
<div class="b" style="left:81px;top:56px;width:494px;height:1px;background:#d0d0dc;"></div>
<div class="b" style="left:580px;top:38px;width:477px;height:18px;background:#c8e6ee;"></div>
<div class="b" style="left:580px;top:56px;width:477px;height:1px;background:#d0d0dc;"></div>
<span class="t" style="right:1774px;top:41px;line-height:14px;color:#1e8c1e;">0.55</span>
<span class="t" style="right:1713px;top:41px;line-height:14px;color:#0a0a0a;">16.53</span>
<span class="t" style="right:1652px;top:41px;line-height:14px;color:#0a0a0a;">3.52</span>
<span class="t" style="right:1591px;top:41px;line-height:14px;color:#0a0a0a;">-0.15</span>
<span class="t" style="right:1408px;top:41px;line-height:14px;color:#0a0a0a;">-2</span>
<span class="t" style="right:1277px;top:41px;line-height:14px;color:#1e8c1e;">0.71</span>
<span class="t" style="right:1218px;top:41px;line-height:14px;color:#0a0a0a;">19.23</span>
<span class="t" style="right:1159px;top:41px;line-height:14px;color:#0a0a0a;">3.58</span>
<span class="t" style="right:1100px;top:41px;line-height:14px;color:#0a0a0a;">-0.08</span>
<div class="b" style="left:18px;top:57px;width:58px;height:18px;background:#fffdf2;"></div>
<div class="b" style="left:18px;top:75px;width:58px;height:1px;background:#d9dce6;"></div>
<span class="t" style="left:-103px;width:300px;text-align:center;top:60px;line-height:14px;color:#0a0a0a;">34</span>
<div class="b" style="left:81px;top:57px;width:494px;height:18px;background:#fffdf2;"></div>
<div class="b" style="left:81px;top:75px;width:494px;height:1px;background:#d0d0dc;"></div>
<div class="b" style="left:580px;top:57px;width:477px;height:18px;background:#fffdf2;"></div>
<div class="b" style="left:580px;top:75px;width:477px;height:1px;background:#d0d0dc;"></div>
<span class="t" style="right:1774px;top:60px;line-height:14px;color:#1e8c1e;">0.595</span>
<span class="t" style="right:1713px;top:60px;line-height:14px;color:#0a0a0a;">18.17</span>
<span class="t" style="right:1652px;top:60px;line-height:14px;color:#0a0a0a;">3.91</span>
<span class="t" style="right:1591px;top:60px;line-height:14px;color:#0a0a0a;">-0.15</span>
<span class="t" style="right:1277px;top:60px;line-height:14px;color:#1e8c1e;">0.865</span>
<span class="t" style="right:1218px;top:60px;line-height:14px;color:#0a0a0a;">22.27</span>
<span class="t" style="right:1159px;top:60px;line-height:14px;color:#0a0a0a;">3.85</span>
<span class="t" style="right:1100px;top:60px;line-height:14px;color:#0a0a0a;">-0.09</span>
<div class="b" style="left:18px;top:76px;width:58px;height:18px;background:#fff;"></div>
<div class="b" style="left:18px;top:94px;width:58px;height:1px;background:#d9dce6;"></div>
<span class="t" style="left:-103px;width:300px;text-align:center;top:79px;line-height:14px;color:#0a0a0a;">33</span>
<div class="b" style="left:81px;top:76px;width:494px;height:18px;background:#c8e6ee;"></div>
<div class="b" style="left:81px;top:94px;width:494px;height:1px;background:#d0d0dc;"></div>
<div class="b" style="left:580px;top:76px;width:477px;height:18px;background:#a7bfde;"></div>
<div class="b" style="left:580px;top:94px;width:477px;height:1px;background:#d0d0dc;"></div>
<span class="t" style="right:1774px;top:79px;line-height:14px;color:#1e8c1e;">0.67</span>
<span class="t" style="right:1713px;top:79px;line-height:14px;color:#0a0a0a;">20.50</span>
<span class="t" style="right:1652px;top:79px;line-height:14px;color:#0a0a0a;">4.36</span>
<span class="t" style="right:1591px;top:79px;line-height:14px;color:#0a0a0a;">-0.15</span>
<span class="t" style="right:1277px;top:79px;line-height:14px;color:#1e8c1e;">0.92</span>
<span class="t" style="right:1218px;top:79px;line-height:14px;color:#0a0a0a;">24.06</span>
<span class="t" style="right:1159px;top:79px;line-height:14px;color:#0a0a0a;">4.19</span>
<span class="t" style="right:1100px;top:79px;line-height:14px;color:#0a0a0a;">-0.09</span>
<div class="b" style="left:18px;top:95px;width:58px;height:18px;background:#fff;"></div>
<div class="b" style="left:18px;top:113px;width:58px;height:1px;background:#d9dce6;"></div>
<span class="t" style="left:-103px;width:300px;text-align:center;top:98px;line-height:14px;color:#0a0a0a;">32</span>
<div class="b" style="left:81px;top:95px;width:494px;height:18px;background:#c8e6ee;"></div>
<div class="b" style="left:81px;top:113px;width:494px;height:1px;background:#d0d0dc;"></div>
<div class="b" style="left:580px;top:95px;width:477px;height:18px;background:#a7bfde;"></div>
<div class="b" style="left:580px;top:113px;width:477px;height:1px;background:#d0d0dc;"></div>
<span class="t" style="right:1774px;top:98px;line-height:14px;color:#1e8c1e;">0.745</span>
<span class="t" style="right:1713px;top:98px;line-height:14px;color:#0a0a0a;">22.84</span>
<span class="t" style="right:1652px;top:98px;line-height:14px;color:#0a0a0a;">4.80</span>
<span class="t" style="right:1591px;top:98px;line-height:14px;color:#0a0a0a;">-0.16</span>
<span class="t" style="right:1277px;top:98px;line-height:14px;color:#1e8c1e;">1.015</span>
<span class="t" style="right:1218px;top:98px;line-height:14px;color:#0a0a0a;">26.66</span>
<span class="t" style="right:1159px;top:98px;line-height:14px;color:#0a0a0a;">4.60</span>
<span class="t" style="right:1100px;top:98px;line-height:14px;color:#0a0a0a;">-0.09</span>
<div class="b" style="left:18px;top:114px;width:58px;height:18px;background:#fff;"></div>
<div class="b" style="left:18px;top:132px;width:58px;height:1px;background:#d9dce6;"></div>
<span class="t" style="left:-103px;width:300px;text-align:center;top:117px;line-height:14px;color:#0a0a0a;">31</span>
<div class="b" style="left:81px;top:114px;width:494px;height:18px;background:#a7bfde;"></div>
<div class="b" style="left:81px;top:132px;width:494px;height:1px;background:#d0d0dc;"></div>
<div class="b" style="left:580px;top:114px;width:477px;height:18px;background:#a7bfde;"></div>
<div class="b" style="left:580px;top:132px;width:477px;height:1px;background:#d0d0dc;"></div>
<span class="t" style="right:1774px;top:117px;line-height:14px;color:#1e8c1e;">0.845</span>
<span class="t" style="right:1713px;top:117px;line-height:14px;color:#0a0a0a;">26.00</span>
<span class="t" style="right:1652px;top:117px;line-height:14px;color:#0a0a0a;">5.39</span>
<span class="t" style="right:1591px;top:117px;line-height:14px;color:#0a0a0a;">-0.16</span>
<span class="t" style="right:1277px;top:117px;line-height:14px;color:#1e8c1e;">1.15</span>
<span class="t" style="right:1218px;top:117px;line-height:14px;color:#0a0a0a;">29.97</span>
<span class="t" style="right:1159px;top:117px;line-height:14px;color:#0a0a0a;">5.03</span>
<span class="t" style="right:1100px;top:117px;line-height:14px;color:#0a0a0a;">-0.09</span>
<div class="b" style="left:18px;top:133px;width:58px;height:18px;background:#fff;"></div>
<div class="b" style="left:18px;top:151px;width:58px;height:1px;background:#d9dce6;"></div>
<span class="t" style="left:-103px;width:300px;text-align:center;top:136px;line-height:14px;color:#0a0a0a;">30</span>
<div class="b" style="left:81px;top:133px;width:494px;height:18px;background:#a7bfde;"></div>
<div class="b" style="left:81px;top:151px;width:494px;height:1px;background:#d0d0dc;"></div>
<div class="b" style="left:580px;top:133px;width:477px;height:18px;background:#a7bfde;"></div>
<div class="b" style="left:580px;top:151px;width:477px;height:1px;background:#d0d0dc;"></div>
<span class="t" style="right:1774px;top:136px;line-height:14px;color:#1e8c1e;">0.975</span>
<span class="t" style="right:1713px;top:136px;line-height:14px;color:#0a0a0a;">29.78</span>
<span class="t" style="right:1652px;top:136px;line-height:14px;color:#0a0a0a;">5.99</span>
<span class="t" style="right:1591px;top:136px;line-height:14px;color:#0a0a0a;">-0.17</span>
<span class="t" style="right:1277px;top:136px;line-height:14px;color:#1e8c1e;">1.31</span>
<span class="t" style="right:1218px;top:136px;line-height:14px;color:#0a0a0a;">33.67</span>
<span class="t" style="right:1159px;top:136px;line-height:14px;color:#0a0a0a;">5.44</span>
<span class="t" style="right:1100px;top:136px;line-height:14px;color:#0a0a0a;">-0.10</span>
<div class="b" style="left:18px;top:152px;width:58px;height:18px;background:#fff;"></div>
<div class="b" style="left:18px;top:170px;width:58px;height:1px;background:#d9dce6;"></div>
<span class="t" style="left:-103px;width:300px;text-align:center;top:155px;line-height:14px;color:#0a0a0a;">29</span>
<div class="b" style="left:81px;top:152px;width:494px;height:18px;background:#a7bfde;"></div>
<div class="b" style="left:81px;top:170px;width:494px;height:1px;background:#d0d0dc;"></div>
<div class="b" style="left:580px;top:152px;width:477px;height:18px;background:#a7bfde;"></div>
<div class="b" style="left:580px;top:170px;width:477px;height:1px;background:#d0d0dc;"></div>
<span class="t" style="right:1774px;top:155px;line-height:14px;color:#1e8c1e;">1.11</span>
<span class="t" style="right:1713px;top:155px;line-height:14px;color:#0a0a0a;">33.80</span>
<span class="t" style="right:1652px;top:155px;line-height:14px;color:#0a0a0a;">6.61</span>
<span class="t" style="right:1591px;top:155px;line-height:14px;color:#0a0a0a;">-0.17</span>
<span class="t" style="right:1277px;top:155px;line-height:14px;color:#1e8c1e;">1.55</span>
<span class="t" style="right:1218px;top:155px;line-height:14px;color:#0a0a0a;">38.34</span>
<span class="t" style="right:1159px;top:155px;line-height:14px;color:#0a0a0a;">5.76</span>
<span class="t" style="right:1100px;top:155px;line-height:14px;color:#0a0a0a;">-0.10</span>
<div class="b" style="left:18px;top:171px;width:58px;height:18px;background:#fff;"></div>
<div class="b" style="left:18px;top:189px;width:58px;height:1px;background:#d9dce6;"></div>
<span class="t" style="left:-103px;width:300px;text-align:center;top:174px;line-height:14px;color:#0a0a0a;">28</span>
<div class="b" style="left:81px;top:171px;width:494px;height:18px;background:#a7bfde;"></div>
<div class="b" style="left:81px;top:189px;width:494px;height:1px;background:#d0d0dc;"></div>
<div class="b" style="left:580px;top:171px;width:477px;height:18px;background:#a7bfde;"></div>
<div class="b" style="left:580px;top:189px;width:477px;height:1px;background:#d0d0dc;"></div>
<span class="t" style="right:1774px;top:174px;line-height:14px;color:#1e8c1e;">1.32</span>
<span class="t" style="right:1713px;top:174px;line-height:14px;color:#0a0a0a;">39.58</span>
<span class="t" style="right:1652px;top:174px;line-height:14px;color:#0a0a0a;">7.33</span>
<span class="t" style="right:1591px;top:174px;line-height:14px;color:#0a0a0a;">-0.17</span>
<span class="t" style="right:1277px;top:174px;line-height:14px;color:#1e8c1e;">1.80</span>
<span class="t" style="right:1218px;top:174px;line-height:14px;color:#0a0a0a;">43.28</span>
<span class="t" style="right:1159px;top:174px;line-height:14px;color:#0a0a0a;">6.08</span>
<span class="t" style="right:1100px;top:174px;line-height:14px;color:#0a0a0a;">-0.10</span>
<div class="b" style="left:18px;top:190px;width:58px;height:18px;background:#fff;"></div>
<div class="b" style="left:18px;top:208px;width:58px;height:1px;background:#d9dce6;"></div>
<span class="t" style="left:-103px;width:300px;text-align:center;top:193px;line-height:14px;color:#0a0a0a;">27</span>
<div class="b" style="left:81px;top:190px;width:494px;height:18px;background:#a7bfde;"></div>
<div class="b" style="left:81px;top:208px;width:494px;height:1px;background:#d0d0dc;"></div>
<div class="b" style="left:580px;top:190px;width:477px;height:18px;background:#a7bfde;"></div>
<div class="b" style="left:580px;top:208px;width:477px;height:1px;background:#d0d0dc;"></div>
<span class="t" style="right:1774px;top:193px;line-height:14px;color:#1e8c1e;">1.55</span>
<span class="t" style="right:1713px;top:193px;line-height:14px;color:#0a0a0a;">45.94</span>
<span class="t" style="right:1652px;top:193px;line-height:14px;color:#0a0a0a;">8.02</span>
<span class="t" style="right:1591px;top:193px;line-height:14px;color:#0a0a0a;">-0.16</span>
<span class="t" style="right:1277px;top:193px;line-height:14px;color:#1e8c1e;">1.955</span>
<span class="t" style="right:1218px;top:193px;line-height:14px;color:#0a0a0a;">47.80</span>
<span class="t" style="right:1159px;top:193px;line-height:14px;color:#0a0a0a;">6.61</span>
<span class="t" style="right:1100px;top:193px;line-height:14px;color:#0a0a0a;">-0.09</span>
<div class="b" style="left:18px;top:209px;width:58px;height:18px;background:#fff;"></div>
<div class="b" style="left:18px;top:227px;width:58px;height:1px;background:#d9dce6;"></div>
<span class="t" style="left:-103px;width:300px;text-align:center;top:212px;line-height:14px;color:#f2001c;">26</span>
<div class="b" style="left:81px;top:209px;width:494px;height:18px;background:#a7bfde;"></div>
<div class="b" style="left:81px;top:227px;width:494px;height:1px;background:#d0d0dc;"></div>
<div class="b" style="left:580px;top:209px;width:477px;height:18px;background:#a7bfde;"></div>
<div class="b" style="left:580px;top:227px;width:477px;height:1px;background:#d0d0dc;"></div>
<span class="t" style="right:1774px;top:212px;line-height:14px;color:#1e8c1e;">1.835</span>
<span class="t" style="right:1713px;top:212px;line-height:14px;color:#0a0a0a;">53.58</span>
<span class="t" style="right:1652px;top:212px;line-height:14px;color:#0a0a0a;">8.64</span>
<span class="t" style="right:1591px;top:212px;line-height:14px;color:#0a0a0a;">-0.15</span>
<span class="t" style="right:1277px;top:212px;line-height:14px;color:#1e8c1e;">2.115</span>
<span class="t" style="right:1218px;top:212px;line-height:14px;color:#0a0a0a;">53.72</span>
<span class="t" style="right:1159px;top:212px;line-height:14px;color:#0a0a0a;">7.39</span>
<span class="t" style="right:1100px;top:212px;line-height:14px;color:#0a0a0a;">-0.08</span>
<div class="b" style="left:18px;top:228px;width:58px;height:18px;background:#ececec;"></div>
<div class="b" style="left:18px;top:246px;width:58px;height:1px;background:#d9dce6;"></div>
<span class="t" style="left:-103px;width:300px;text-align:center;top:231px;line-height:14px;color:#0a0a0a;">25</span>
<div class="b" style="left:81px;top:228px;width:494px;height:18px;background:#a7bfde;"></div>
<div class="b" style="left:81px;top:246px;width:494px;height:1px;background:#d0d0dc;"></div>
<div class="b" style="left:580px;top:228px;width:477px;height:18px;background:#a7bfde;"></div>
<div class="b" style="left:580px;top:246px;width:477px;height:1px;background:#d0d0dc;"></div>
<span class="t" style="right:1774px;top:231px;line-height:14px;color:#1e8c1e;">2.20</span>
<span class="t" style="right:1713px;top:231px;line-height:14px;color:#0a0a0a;">62.71</span>
<span class="t" style="right:1652px;top:231px;line-height:14px;color:#0a0a0a;">8.97</span>
<span class="t" style="right:1591px;top:231px;line-height:14px;color:#0a0a0a;">-0.13</span>
<span class="t" style="right:1408px;top:231px;line-height:14px;color:#0a0a0a;">+2</span>
<span class="t" style="right:1277px;top:231px;line-height:14px;color:#1e8c1e;">2.32</span>
<span class="t" style="right:1218px;top:231px;line-height:14px;color:#0a0a0a;">62.49</span>
<span class="t" style="right:1159px;top:231px;line-height:14px;color:#0a0a0a;">8.41</span>
<span class="t" style="right:1100px;top:231px;line-height:14px;color:#0a0a0a;">-0.07</span>
<div class="b" style="left:18px;top:247px;width:58px;height:18px;background:#ececec;"></div>
<div class="b" style="left:18px;top:265px;width:58px;height:1px;background:#d9dce6;"></div>
<span class="t" style="left:-103px;width:300px;text-align:center;top:250px;line-height:14px;color:#0a0a0a;">24.5</span>
<div class="b" style="left:81px;top:247px;width:494px;height:18px;background:#a7bfde;"></div>
<div class="b" style="left:81px;top:265px;width:494px;height:1px;background:#d0d0dc;"></div>
<div class="b" style="left:580px;top:247px;width:477px;height:18px;background:#a7bfde;"></div>
<div class="b" style="left:580px;top:265px;width:477px;height:1px;background:#d0d0dc;"></div>
<span class="t" style="right:1774px;top:250px;line-height:14px;color:#1e8c1e;">2.39</span>
<span class="t" style="right:1713px;top:250px;line-height:14px;color:#0a0a0a;">68.09</span>
<span class="t" style="right:1652px;top:250px;line-height:14px;color:#0a0a0a;">9.09</span>
<span class="t" style="right:1591px;top:250px;line-height:14px;color:#0a0a0a;">-0.12</span>
<div class="b" style="left:18px;top:266px;width:58px;height:18px;background:#ececec;"></div>
<div class="b" style="left:18px;top:284px;width:58px;height:1px;background:#d9dce6;"></div>
<span class="t" style="left:-103px;width:300px;text-align:center;top:269px;line-height:14px;color:#0a0a0a;">24</span>
<div class="b" style="left:81px;top:266px;width:494px;height:18px;background:#a7bfde;"></div>
<div class="b" style="left:81px;top:284px;width:494px;height:1px;background:#d0d0dc;"></div>
<div class="b" style="left:580px;top:266px;width:477px;height:18px;background:#a7bfde;"></div>
<div class="b" style="left:580px;top:284px;width:477px;height:1px;background:#d0d0dc;"></div>
<span class="t" style="right:1774px;top:269px;line-height:14px;color:#1e8c1e;">2.615</span>
<span class="t" style="right:1713px;top:269px;line-height:14px;color:#0a0a0a;">74.06</span>
<span class="t" style="right:1652px;top:269px;line-height:14px;color:#0a0a0a;">8.94</span>
<span class="t" style="right:1591px;top:269px;line-height:14px;color:#0a0a0a;">-0.10</span>
<span class="t" style="right:1277px;top:269px;line-height:14px;color:#1e8c1e;">2.67</span>
<span class="t" style="right:1218px;top:269px;line-height:14px;color:#0a0a0a;">73.65</span>
<span class="t" style="right:1159px;top:269px;line-height:14px;color:#0a0a0a;">8.69</span>
<span class="t" style="right:1100px;top:269px;line-height:14px;color:#0a0a0a;">-0.05</span>
<div class="b" style="left:18px;top:285px;width:58px;height:18px;background:#ececec;"></div>
<div class="b" style="left:18px;top:303px;width:58px;height:1px;background:#d9dce6;"></div>
<span class="t" style="left:-103px;width:300px;text-align:center;top:288px;line-height:14px;color:#0a0a0a;">23.5</span>
<div class="b" style="left:81px;top:285px;width:494px;height:18px;background:#a7bfde;"></div>
<div class="b" style="left:81px;top:303px;width:494px;height:1px;background:#d0d0dc;"></div>
<div class="b" style="left:580px;top:285px;width:477px;height:18px;background:#a7bfde;"></div>
<div class="b" style="left:580px;top:303px;width:477px;height:1px;background:#d0d0dc;"></div>
<span class="t" style="right:1774px;top:288px;line-height:14px;color:#1e8c1e;">2.85</span>
<span class="t" style="right:1713px;top:288px;line-height:14px;color:#0a0a0a;">81.30</span>
<span class="t" style="right:1652px;top:288px;line-height:14px;color:#0a0a0a;">8.45</span>
<span class="t" style="right:1591px;top:288px;line-height:14px;color:#0a0a0a;">-0.07</span>
<div class="b" style="left:18px;top:304px;width:58px;height:18px;background:#ececec;"></div>
<div class="b" style="left:18px;top:322px;width:58px;height:1px;background:#d9dce6;"></div>
<span class="t" style="left:-103px;width:300px;text-align:center;top:307px;line-height:14px;color:#0a0a0a;">23</span>
<div class="b" style="left:81px;top:304px;width:494px;height:18px;background:#a7bfde;"></div>
<div class="b" style="left:81px;top:322px;width:494px;height:1px;background:#d0d0dc;"></div>
<div class="b" style="left:580px;top:304px;width:477px;height:18px;background:#a7bfde;"></div>
<div class="b" style="left:580px;top:322px;width:477px;height:1px;background:#d0d0dc;"></div>
<span class="t" style="right:1774px;top:307px;line-height:14px;color:#1e8c1e;">3.125</span>
<span class="t" style="right:1713px;top:307px;line-height:14px;color:#0a0a0a;">90.33</span>
<span class="t" style="right:1652px;top:307px;line-height:14px;color:#0a0a0a;">6.71</span>
<span class="t" style="right:1591px;top:307px;line-height:14px;color:#0a0a0a;">-0.04</span>
<span class="t" style="right:1277px;top:307px;line-height:14px;color:#1e8c1e;">3.00</span>
<span class="t" style="right:1218px;top:307px;line-height:14px;color:#0a0a0a;">97.11</span>
<span class="t" style="right:1159px;top:307px;line-height:14px;color:#0a0a0a;">3.88</span>
<span class="t" style="right:1100px;top:307px;line-height:14px;color:#0a0a0a;">-0.01</span>
<div class="b" style="left:18px;top:323px;width:58px;height:18px;background:#ececec;"></div>
<div class="b" style="left:18px;top:341px;width:58px;height:1px;background:#d9dce6;"></div>
<span class="t" style="left:-103px;width:300px;text-align:center;top:326px;line-height:14px;color:#0a0a0a;">22.5</span>
<div class="b" style="left:81px;top:323px;width:494px;height:18px;background:#a7bfde;"></div>
<div class="b" style="left:81px;top:341px;width:494px;height:1px;background:#d0d0dc;"></div>
<div class="b" style="left:580px;top:323px;width:477px;height:18px;background:#a7bfde;"></div>
<div class="b" style="left:580px;top:341px;width:477px;height:1px;background:#d0d0dc;"></div>
<span class="t" style="right:1774px;top:326px;line-height:14px;color:#1e8c1e;">3.40</span>
<span class="t" style="right:1713px;top:326px;line-height:14px;color:#0a0a0a;">99.99</span>
<span class="t" style="right:1652px;top:326px;line-height:14px;color:#0a0a0a;">3.00</span>
<span class="t" style="right:1591px;top:326px;line-height:14px;color:#0a0a0a;">-0.01</span>
<div class="b" style="left:18px;top:342px;width:58px;height:18px;background:#ececec;"></div>
<div class="b" style="left:18px;top:360px;width:58px;height:1px;background:#d9dce6;"></div>
<span class="t" style="left:-103px;width:300px;text-align:center;top:345px;line-height:14px;color:#0a0a0a;">22</span>
<div class="b" style="left:81px;top:342px;width:494px;height:18px;background:#a7bfde;"></div>
<div class="b" style="left:81px;top:360px;width:494px;height:1px;background:#d0d0dc;"></div>
<div class="b" style="left:580px;top:342px;width:477px;height:18px;background:#a7bfde;"></div>
<div class="b" style="left:580px;top:360px;width:477px;height:1px;background:#d0d0dc;"></div>
<span class="t" style="right:1774px;top:345px;line-height:14px;color:#1e8c1e;">3.725</span>
<span class="t" style="right:1713px;top:345px;line-height:14px;color:#0a0a0a;">99.99</span>
<span class="t" style="right:1652px;top:345px;line-height:14px;color:#0a0a0a;">2.18</span>
<span class="t" style="right:1591px;top:345px;line-height:14px;color:#0a0a0a;">-0.01</span>
<span class="t" style="right:1277px;top:345px;line-height:14px;color:#1e8c1e;">3.35</span>
<span class="t" style="right:1218px;top:345px;line-height:14px;color:#0a0a0a;">99.99</span>
<span class="t" style="right:1159px;top:345px;line-height:14px;color:#0a0a0a;">0.00</span>
<span class="t" style="right:1100px;top:345px;line-height:14px;color:#0a0a0a;">0.00</span>
<div class="b" style="left:18px;top:361px;width:58px;height:18px;background:#ececec;"></div>
<div class="b" style="left:18px;top:379px;width:58px;height:1px;background:#d9dce6;"></div>
<span class="t" style="left:-103px;width:300px;text-align:center;top:364px;line-height:14px;color:#0a0a0a;">21.5</span>
<div class="b" style="left:81px;top:361px;width:494px;height:18px;background:#a7bfde;"></div>
<div class="b" style="left:81px;top:379px;width:494px;height:1px;background:#d0d0dc;"></div>
<div class="b" style="left:580px;top:361px;width:477px;height:18px;background:#a7bfde;"></div>
<div class="b" style="left:580px;top:379px;width:477px;height:1px;background:#d0d0dc;"></div>
<span class="t" style="right:1774px;top:364px;line-height:14px;color:#1e8c1e;">4.05</span>
<span class="t" style="right:1713px;top:364px;line-height:14px;color:#0a0a0a;">99.99</span>
<span class="t" style="right:1652px;top:364px;line-height:14px;color:#0a0a0a;">0.00</span>
<span class="t" style="right:1591px;top:364px;line-height:14px;color:#0a0a0a;">0.00</span>
<div class="b" style="left:18px;top:380px;width:58px;height:18px;background:#ececec;"></div>
<div class="b" style="left:18px;top:398px;width:58px;height:1px;background:#d9dce6;"></div>
<span class="t" style="left:-103px;width:300px;text-align:center;top:383px;line-height:14px;color:#0a0a0a;">21</span>
<div class="b" style="left:81px;top:380px;width:494px;height:18px;background:#a7bfde;"></div>
<div class="b" style="left:81px;top:398px;width:494px;height:1px;background:#d0d0dc;"></div>
<div class="b" style="left:580px;top:380px;width:477px;height:18px;background:#a7bfde;"></div>
<div class="b" style="left:580px;top:398px;width:477px;height:1px;background:#d0d0dc;"></div>
<span class="t" style="right:1774px;top:383px;line-height:14px;color:#1e8c1e;">4.425</span>
<span class="t" style="right:1713px;top:383px;line-height:14px;color:#0a0a0a;">99.99</span>
<span class="t" style="right:1652px;top:383px;line-height:14px;color:#0a0a0a;">0.00</span>
<span class="t" style="right:1591px;top:383px;line-height:14px;color:#0a0a0a;">0.00</span>
<span class="t" style="right:1530px;top:383px;line-height:14px;color:#0a0a0a;">2.90</span>
<span class="t" style="right:1469px;top:383px;line-height:14px;color:#0a0a0a;">0.00</span>
<span class="t" style="right:1408px;top:383px;line-height:14px;color:#0a0a0a;">-2</span>
<span class="t" style="right:1340px;top:383px;line-height:14px;color:#0a0a0a;">+2</span>
<span class="t" style="right:1277px;top:383px;line-height:14px;color:#1e8c1e;">4.00</span>
<span class="t" style="right:1218px;top:383px;line-height:14px;color:#0a0a0a;">99.99</span>
<span class="t" style="right:1159px;top:383px;line-height:14px;color:#0a0a0a;">0.00</span>
<span class="t" style="right:1100px;top:383px;line-height:14px;color:#0a0a0a;">0.00</span>
<div class="b" style="left:18px;top:399px;width:58px;height:18px;background:#ececec;"></div>
<div class="b" style="left:18px;top:417px;width:58px;height:1px;background:#d9dce6;"></div>
<span class="t" style="left:-103px;width:300px;text-align:center;top:402px;line-height:14px;color:#0a0a0a;">20.5</span>
<div class="b" style="left:81px;top:399px;width:494px;height:18px;background:#a7bfde;"></div>
<div class="b" style="left:81px;top:417px;width:494px;height:1px;background:#d0d0dc;"></div>
<div class="b" style="left:580px;top:399px;width:477px;height:18px;background:#a7bfde;"></div>
<div class="b" style="left:580px;top:417px;width:477px;height:1px;background:#d0d0dc;"></div>
<span class="t" style="right:1774px;top:402px;line-height:14px;color:#1e8c1e;">4.825</span>
<span class="t" style="right:1713px;top:402px;line-height:14px;color:#0a0a0a;">99.99</span>
<span class="t" style="right:1652px;top:402px;line-height:14px;color:#0a0a0a;">0.00</span>
<span class="t" style="right:1591px;top:402px;line-height:14px;color:#0a0a0a;">0.00</span>
<div class="b" style="left:18px;top:418px;width:58px;height:18px;background:#ececec;"></div>
<div class="b" style="left:18px;top:436px;width:58px;height:1px;background:#d9dce6;"></div>
<span class="t" style="left:-103px;width:300px;text-align:center;top:421px;line-height:14px;color:#0a0a0a;">20</span>
<div class="b" style="left:81px;top:418px;width:494px;height:18px;background:#a7bfde;"></div>
<div class="b" style="left:81px;top:436px;width:494px;height:1px;background:#d0d0dc;"></div>
<div class="b" style="left:580px;top:418px;width:477px;height:18px;background:#a7bfde;"></div>
<div class="b" style="left:580px;top:436px;width:477px;height:1px;background:#d0d0dc;"></div>
<span class="t" style="right:1774px;top:421px;line-height:14px;color:#1e8c1e;">5.25</span>
<span class="t" style="right:1713px;top:421px;line-height:14px;color:#0a0a0a;">99.99</span>
<span class="t" style="right:1652px;top:421px;line-height:14px;color:#0a0a0a;">0.00</span>
<span class="t" style="right:1591px;top:421px;line-height:14px;color:#0a0a0a;">0.00</span>
<span class="t" style="right:1277px;top:421px;line-height:14px;color:#f2001c;">4.155</span>
<span class="t" style="right:1218px;top:421px;line-height:14px;color:#0a0a0a;">99.99</span>
<span class="t" style="right:1159px;top:421px;line-height:14px;color:#0a0a0a;">0.00</span>
<span class="t" style="right:1100px;top:421px;line-height:14px;color:#0a0a0a;">0.00</span>
<div class="b" style="left:18px;top:437px;width:58px;height:18px;background:#ececec;"></div>
<div class="b" style="left:18px;top:455px;width:58px;height:1px;background:#d9dce6;"></div>
<span class="t" style="left:-103px;width:300px;text-align:center;top:440px;line-height:14px;color:#0a0a0a;">19.5</span>
<div class="b" style="left:81px;top:437px;width:494px;height:18px;background:#c8e6ee;"></div>
<div class="b" style="left:81px;top:455px;width:494px;height:1px;background:#d0d0dc;"></div>
<div class="b" style="left:580px;top:437px;width:477px;height:18px;background:#a7bfde;"></div>
<div class="b" style="left:580px;top:455px;width:477px;height:1px;background:#d0d0dc;"></div>
<span class="t" style="right:1774px;top:440px;line-height:14px;color:#1e8c1e;">5.70</span>
<span class="t" style="right:1713px;top:440px;line-height:14px;color:#0a0a0a;">99.99</span>
<span class="t" style="right:1652px;top:440px;line-height:14px;color:#0a0a0a;">0.00</span>
<span class="t" style="right:1591px;top:440px;line-height:14px;color:#0a0a0a;">0.00</span>
<div class="b" style="left:447px;top:57px;width:60px;height:18px;background:#fdeeb4;"></div>
<div class="b" style="left:503px;top:59px;width:1px;height:14px;background:#000;"></div>
<div class="b" style="left:141px;top:0px;width:1px;height:456px;background:#d0d0dc;"></div>
<div class="b" style="left:202px;top:0px;width:1px;height:456px;background:#d0d0dc;"></div>
<div class="b" style="left:263px;top:0px;width:1px;height:456px;background:#d0d0dc;"></div>
<div class="b" style="left:324px;top:0px;width:1px;height:456px;background:#d0d0dc;"></div>
<div class="b" style="left:385px;top:0px;width:1px;height:456px;background:#d0d0dc;"></div>
<div class="b" style="left:446px;top:0px;width:1px;height:456px;background:#d0d0dc;"></div>
<div class="b" style="left:507px;top:0px;width:1px;height:456px;background:#d0d0dc;"></div>
<div class="b" style="left:638px;top:0px;width:1px;height:456px;background:#d0d0dc;"></div>
<div class="b" style="left:697px;top:0px;width:1px;height:456px;background:#d0d0dc;"></div>
<div class="b" style="left:756px;top:0px;width:1px;height:456px;background:#d0d0dc;"></div>
<div class="b" style="left:815px;top:0px;width:1px;height:456px;background:#d0d0dc;"></div>
<div class="b" style="left:874px;top:0px;width:1px;height:456px;background:#d0d0dc;"></div>
<div class="b" style="left:933px;top:0px;width:1px;height:456px;background:#d0d0dc;"></div>
<div class="b" style="left:992px;top:0px;width:1px;height:456px;background:#d0d0dc;"></div>
</div>
<div class="b" style="left:1058px;top:293px;width:16px;height:446px;background:#d1d6e5;"></div>
<svg class="b" style="left:1061px;top:298px" width="10" height="6" viewBox="0 0 10 6"><path d="M0 5 H9 L4.5 0.3 Z" fill="#64749a"/></svg>
<svg class="b" style="left:1061px;top:729px" width="10" height="6" viewBox="0 0 10 6"><path d="M0 0.5 H9 L4.5 5.2 Z" fill="#64749a"/></svg>
<div class="b" style="left:1061px;top:466px;width:9px;height:133px;background:#9aa6ba;"></div>
<svg class="b" style="left:535px;top:744px" width="17" height="5" viewBox="0 0 17 5"><rect x="0" y="0" width="1" height="1" fill="#65749a"/><rect x="4" y="0" width="1" height="1" fill="#65749a"/><rect x="8" y="0" width="1" height="1" fill="#65749a"/><rect x="12" y="0" width="1" height="1" fill="#65749a"/><rect x="16" y="0" width="1" height="1" fill="#65749a"/><rect x="2" y="0" width="1" height="1" fill="#e6e9f2"/><rect x="6" y="0" width="1" height="1" fill="#e6e9f2"/><rect x="10" y="0" width="1" height="1" fill="#e6e9f2"/><rect x="14" y="0" width="1" height="1" fill="#e6e9f2"/><rect x="2" y="2" width="1" height="1" fill="#65749a"/><rect x="6" y="2" width="1" height="1" fill="#65749a"/><rect x="10" y="2" width="1" height="1" fill="#65749a"/><rect x="14" y="2" width="1" height="1" fill="#65749a"/><rect x="0" y="2" width="1" height="1" fill="#e6e9f2"/><rect x="4" y="2" width="1" height="1" fill="#e6e9f2"/><rect x="8" y="2" width="1" height="1" fill="#e6e9f2"/><rect x="12" y="2" width="1" height="1" fill="#e6e9f2"/><rect x="16" y="2" width="1" height="1" fill="#e6e9f2"/><rect x="0" y="4" width="1" height="1" fill="#65749a"/><rect x="4" y="4" width="1" height="1" fill="#65749a"/><rect x="8" y="4" width="1" height="1" fill="#65749a"/><rect x="12" y="4" width="1" height="1" fill="#65749a"/><rect x="16" y="4" width="1" height="1" fill="#65749a"/><rect x="2" y="4" width="1" height="1" fill="#e6e9f2"/><rect x="6" y="4" width="1" height="1" fill="#e6e9f2"/><rect x="10" y="4" width="1" height="1" fill="#e6e9f2"/><rect x="14" y="4" width="1" height="1" fill="#e6e9f2"/></svg>
<div class="b" style="left:17px;top:752px;width:60px;height:153px;background:#fff;border:1px solid #97a2b8;box-sizing:border-box;"></div>
<div class="b" style="left:18px;top:753px;width:58px;height:20px;background:#f8f9fd;"></div>
<div class="b" style="left:18px;top:773px;width:58px;height:1px;background:#cdd1e2;"></div>
<span class="t" style="left:-103px;width:300px;text-align:center;top:756px;line-height:14px;color:#1b2236;">PUTS</span>
<div class="b" style="left:80px;top:752px;width:496px;height:153px;background:#a7bfde;border:1px solid #97a2b8;box-sizing:border-box;"></div>
<div class="b" style="left:81px;top:753px;width:494px;height:21px;background:#f8f9fd;"></div>
<div class="b" style="left:141px;top:753px;width:1px;height:21px;background:#cdd1e2;"></div>
<div class="b" style="left:202px;top:753px;width:1px;height:21px;background:#cdd1e2;"></div>
<div class="b" style="left:263px;top:753px;width:1px;height:21px;background:#cdd1e2;"></div>
<div class="b" style="left:324px;top:753px;width:1px;height:21px;background:#cdd1e2;"></div>
<div class="b" style="left:385px;top:753px;width:1px;height:21px;background:#cdd1e2;"></div>
<div class="b" style="left:446px;top:753px;width:1px;height:21px;background:#cdd1e2;"></div>
<div class="b" style="left:507px;top:753px;width:1px;height:21px;background:#cdd1e2;"></div>
<span class="t" style="left:-39.0px;width:300px;text-align:center;top:756px;line-height:14px;color:#1b2236;">Mid</span>
<span class="t" style="left:22.0px;width:300px;text-align:center;top:756px;line-height:14px;color:#1b2236;">Delta</span>
<span class="t" style="left:83.0px;width:300px;text-align:center;top:756px;line-height:14px;color:#1b2236;">Gamma</span>
<span class="t" style="left:144.0px;width:300px;text-align:center;top:756px;line-height:14px;color:#1b2236;">Theta</span>
<span class="t" style="left:205.0px;width:300px;text-align:center;top:756px;line-height:14px;color:#1b2236;">OrigPrice</span>
<span class="t" style="left:266.0px;width:300px;text-align:center;top:756px;line-height:14px;color:#1b2236;">IVChg</span>
<span class="t" style="left:327.0px;width:300px;text-align:center;top:756px;line-height:14px;color:#1b2236;">Model</span>
<span class="t" style="left:391.5px;width:300px;text-align:center;top:756px;line-height:14px;color:#1b2236;">Pos</span>
<div class="b" style="left:579px;top:752px;width:496px;height:153px;background:#a7bfde;border:1px solid #97a2b8;box-sizing:border-box;"></div>
<div class="b" style="left:580px;top:753px;width:494px;height:21px;background:#f8f9fd;"></div>
<div class="b" style="left:638px;top:753px;width:1px;height:21px;background:#cdd1e2;"></div>
<div class="b" style="left:697px;top:753px;width:1px;height:21px;background:#cdd1e2;"></div>
<div class="b" style="left:756px;top:753px;width:1px;height:21px;background:#cdd1e2;"></div>
<div class="b" style="left:815px;top:753px;width:1px;height:21px;background:#cdd1e2;"></div>
<div class="b" style="left:874px;top:753px;width:1px;height:21px;background:#cdd1e2;"></div>
<div class="b" style="left:933px;top:753px;width:1px;height:21px;background:#cdd1e2;"></div>
<div class="b" style="left:992px;top:753px;width:1px;height:21px;background:#cdd1e2;"></div>
<div class="b" style="left:1057px;top:753px;width:1px;height:21px;background:#cdd1e2;"></div>
<span class="t" style="left:459.0px;width:300px;text-align:center;top:756px;line-height:14px;color:#1b2236;">Mid</span>
<span class="t" style="left:518.0px;width:300px;text-align:center;top:756px;line-height:14px;color:#1b2236;">Delta</span>
<span class="t" style="left:577.0px;width:300px;text-align:center;top:756px;line-height:14px;color:#1b2236;">Gamma</span>
<span class="t" style="left:636.0px;width:300px;text-align:center;top:756px;line-height:14px;color:#1b2236;">Theta</span>
<span class="t" style="left:695.0px;width:300px;text-align:center;top:756px;line-height:14px;color:#1b2236;">OrigPrice</span>
<span class="t" style="left:754.0px;width:300px;text-align:center;top:756px;line-height:14px;color:#1b2236;">IVChg</span>
<span class="t" style="left:813.0px;width:300px;text-align:center;top:756px;line-height:14px;color:#1b2236;">Model</span>
<span class="t" style="left:875.0px;width:300px;text-align:center;top:756px;line-height:14px;color:#1b2236;">Pos</span>
<span class="t" style="left:916.0px;width:300px;text-align:center;top:756px;line-height:14px;color:#1b2236;"></span>
<div class="b" style="left:0;top:774px;width:1912px;height:130px;overflow:hidden">
<div class="b" style="left:18px;top:0px;width:58px;height:18px;background:#fff;"></div>
<div class="b" style="left:18px;top:18px;width:58px;height:1px;background:#d9dce6;"></div>
<span class="t" style="left:-103px;width:300px;text-align:center;top:3px;line-height:14px;color:#0a0a0a;">24</span>
<div class="b" style="left:81px;top:0px;width:494px;height:18px;background:#a7bfde;"></div>
<div class="b" style="left:81px;top:18px;width:494px;height:1px;background:#d0d0dc;"></div>
<div class="b" style="left:580px;top:0px;width:477px;height:18px;background:#a7bfde;"></div>
<div class="b" style="left:580px;top:18px;width:477px;height:1px;background:#d0d0dc;"></div>
<span class="t" style="right:1774px;top:3px;line-height:14px;color:#f2001c;">1.48</span>
<span class="t" style="right:1713px;top:3px;line-height:14px;color:#0a0a0a;">-32.35</span>
<span class="t" style="right:1652px;top:3px;line-height:14px;color:#0a0a0a;">5.85</span>
<span class="t" style="right:1591px;top:3px;line-height:14px;color:#0a0a0a;">-0.18</span>
<span class="t" style="right:1277px;top:3px;line-height:14px;color:#f2001c;">2.46</span>
<span class="t" style="right:1218px;top:3px;line-height:14px;color:#0a0a0a;">-34.16</span>
<span class="t" style="right:1159px;top:3px;line-height:14px;color:#0a0a0a;">4.15</span>
<span class="t" style="right:1100px;top:3px;line-height:14px;color:#0a0a0a;">-0.12</span>
<div class="b" style="left:18px;top:19px;width:58px;height:18px;background:#fff;"></div>
<div class="b" style="left:18px;top:37px;width:58px;height:1px;background:#d9dce6;"></div>
<span class="t" style="left:-103px;width:300px;text-align:center;top:22px;line-height:14px;color:#0a0a0a;">23.5</span>
<div class="b" style="left:81px;top:19px;width:494px;height:18px;background:#a7bfde;"></div>
<div class="b" style="left:81px;top:37px;width:494px;height:1px;background:#d0d0dc;"></div>
<div class="b" style="left:580px;top:19px;width:477px;height:18px;background:#a7bfde;"></div>
<div class="b" style="left:580px;top:37px;width:477px;height:1px;background:#d0d0dc;"></div>
<span class="t" style="right:1774px;top:22px;line-height:14px;color:#f2001c;">1.23</span>
<span class="t" style="right:1713px;top:22px;line-height:14px;color:#0a0a0a;">-28.94</span>
<span class="t" style="right:1652px;top:22px;line-height:14px;color:#0a0a0a;">5.71</span>
<span class="t" style="right:1591px;top:22px;line-height:14px;color:#0a0a0a;">-0.17</span>
<div class="b" style="left:18px;top:38px;width:58px;height:18px;background:#fff;"></div>
<div class="b" style="left:18px;top:56px;width:58px;height:1px;background:#d9dce6;"></div>
<span class="t" style="left:-103px;width:300px;text-align:center;top:41px;line-height:14px;color:#0a0a0a;">23</span>
<div class="b" style="left:81px;top:38px;width:494px;height:18px;background:#a7bfde;"></div>
<div class="b" style="left:81px;top:56px;width:494px;height:1px;background:#d0d0dc;"></div>
<div class="b" style="left:580px;top:38px;width:477px;height:18px;background:#a7bfde;"></div>
<div class="b" style="left:580px;top:56px;width:477px;height:1px;background:#d0d0dc;"></div>
<span class="t" style="right:1774px;top:41px;line-height:14px;color:#f2001c;">1.00</span>
<span class="t" style="right:1713px;top:41px;line-height:14px;color:#0a0a0a;">-25.45</span>
<span class="t" style="right:1652px;top:41px;line-height:14px;color:#0a0a0a;">5.51</span>
<span class="t" style="right:1591px;top:41px;line-height:14px;color:#0a0a0a;">-0.15</span>
<span class="t" style="right:1277px;top:41px;line-height:14px;color:#f2001c;">1.95</span>
<span class="t" style="right:1218px;top:41px;line-height:14px;color:#0a0a0a;">-29.82</span>
<span class="t" style="right:1159px;top:41px;line-height:14px;color:#0a0a0a;">4.04</span>
<span class="t" style="right:1100px;top:41px;line-height:14px;color:#0a0a0a;">-0.11</span>
<div class="b" style="left:18px;top:57px;width:58px;height:18px;background:#fff;"></div>
<div class="b" style="left:18px;top:75px;width:58px;height:1px;background:#d9dce6;"></div>
<span class="t" style="left:-103px;width:300px;text-align:center;top:60px;line-height:14px;color:#0a0a0a;">22.5</span>
<div class="b" style="left:81px;top:57px;width:494px;height:18px;background:#a7bfde;"></div>
<div class="b" style="left:81px;top:75px;width:494px;height:1px;background:#d0d0dc;"></div>
<div class="b" style="left:580px;top:57px;width:477px;height:18px;background:#a7bfde;"></div>
<div class="b" style="left:580px;top:75px;width:477px;height:1px;background:#d0d0dc;"></div>
<span class="t" style="right:1774px;top:60px;line-height:14px;color:#f2001c;">0.785</span>
<span class="t" style="right:1713px;top:60px;line-height:14px;color:#0a0a0a;">-22.10</span>
<span class="t" style="right:1652px;top:60px;line-height:14px;color:#0a0a0a;">5.35</span>
<span class="t" style="right:1591px;top:60px;line-height:14px;color:#0a0a0a;">-0.14</span>
<div class="b" style="left:18px;top:76px;width:58px;height:18px;background:#fff;"></div>
<div class="b" style="left:18px;top:94px;width:58px;height:1px;background:#d9dce6;"></div>
<span class="t" style="left:-103px;width:300px;text-align:center;top:79px;line-height:14px;color:#0a0a0a;">22</span>
<div class="b" style="left:81px;top:76px;width:494px;height:18px;background:#a7bfde;"></div>
<div class="b" style="left:81px;top:94px;width:494px;height:1px;background:#d0d0dc;"></div>
<div class="b" style="left:580px;top:76px;width:477px;height:18px;background:#a7bfde;"></div>
<div class="b" style="left:580px;top:94px;width:477px;height:1px;background:#d0d0dc;"></div>
<span class="t" style="right:1774px;top:79px;line-height:14px;color:#f2001c;">0.60</span>
<span class="t" style="right:1713px;top:79px;line-height:14px;color:#0a0a0a;">-18.30</span>
<span class="t" style="right:1652px;top:79px;line-height:14px;color:#0a0a0a;">4.87</span>
<span class="t" style="right:1591px;top:79px;line-height:14px;color:#0a0a0a;">-0.12</span>
<span class="t" style="right:1277px;top:79px;line-height:14px;color:#1e8c1e;">1.37</span>
<span class="t" style="right:1218px;top:79px;line-height:14px;color:#0a0a0a;">-24.54</span>
<span class="t" style="right:1159px;top:79px;line-height:14px;color:#0a0a0a;">3.94</span>
<span class="t" style="right:1100px;top:79px;line-height:14px;color:#0a0a0a;">-0.10</span>
<div class="b" style="left:18px;top:95px;width:58px;height:18px;background:#fff;"></div>
<div class="b" style="left:18px;top:113px;width:58px;height:1px;background:#d9dce6;"></div>
<span class="t" style="left:-103px;width:300px;text-align:center;top:98px;line-height:14px;color:#0a0a0a;">21.5</span>
<div class="b" style="left:81px;top:95px;width:494px;height:18px;background:#a7bfde;"></div>
<div class="b" style="left:81px;top:113px;width:494px;height:1px;background:#d0d0dc;"></div>
<div class="b" style="left:580px;top:95px;width:477px;height:18px;background:#a7bfde;"></div>
<div class="b" style="left:580px;top:113px;width:477px;height:1px;background:#d0d0dc;"></div>
<span class="t" style="right:1774px;top:98px;line-height:14px;color:#f2001c;">0.43</span>
<span class="t" style="right:1713px;top:98px;line-height:14px;color:#0a0a0a;">-14.65</span>
<span class="t" style="right:1652px;top:98px;line-height:14px;color:#0a0a0a;">4.42</span>
<span class="t" style="right:1591px;top:98px;line-height:14px;color:#0a0a0a;">-0.10</span>
<div class="b" style="left:18px;top:114px;width:58px;height:18px;background:#fff;"></div>
<div class="b" style="left:18px;top:132px;width:58px;height:1px;background:#d9dce6;"></div>
<span class="t" style="left:-103px;width:300px;text-align:center;top:117px;line-height:14px;color:#0a0a0a;">21</span>
<div class="b" style="left:81px;top:114px;width:494px;height:18px;background:#a7bfde;"></div>
<div class="b" style="left:81px;top:132px;width:494px;height:1px;background:#d0d0dc;"></div>
<div class="b" style="left:580px;top:114px;width:477px;height:18px;background:#a7bfde;"></div>
<div class="b" style="left:580px;top:132px;width:477px;height:1px;background:#d0d0dc;"></div>
<span class="t" style="right:1774px;top:117px;line-height:14px;color:#f2001c;">0.30</span>
<span class="t" style="right:1713px;top:117px;line-height:14px;color:#0a0a0a;">-11.62</span>
<span class="t" style="right:1652px;top:117px;line-height:14px;color:#0a0a0a;">4.02</span>
<span class="t" style="right:1591px;top:117px;line-height:14px;color:#0a0a0a;">-0.08</span>
<span class="t" style="right:1277px;top:117px;line-height:14px;color:#f2001c;">0.80</span>
<span class="t" style="right:1218px;top:117px;line-height:14px;color:#0a0a0a;">-18.15</span>
<span class="t" style="right:1159px;top:117px;line-height:14px;color:#0a0a0a;">3.72</span>
<span class="t" style="right:1100px;top:117px;line-height:14px;color:#0a0a0a;">-0.07</span>
<div class="b" style="left:141px;top:0px;width:1px;height:133px;background:#d0d0dc;"></div>
<div class="b" style="left:202px;top:0px;width:1px;height:133px;background:#d0d0dc;"></div>
<div class="b" style="left:263px;top:0px;width:1px;height:133px;background:#d0d0dc;"></div>
<div class="b" style="left:324px;top:0px;width:1px;height:133px;background:#d0d0dc;"></div>
<div class="b" style="left:385px;top:0px;width:1px;height:133px;background:#d0d0dc;"></div>
<div class="b" style="left:446px;top:0px;width:1px;height:133px;background:#d0d0dc;"></div>
<div class="b" style="left:507px;top:0px;width:1px;height:133px;background:#d0d0dc;"></div>
<div class="b" style="left:638px;top:0px;width:1px;height:133px;background:#d0d0dc;"></div>
<div class="b" style="left:697px;top:0px;width:1px;height:133px;background:#d0d0dc;"></div>
<div class="b" style="left:756px;top:0px;width:1px;height:133px;background:#d0d0dc;"></div>
<div class="b" style="left:815px;top:0px;width:1px;height:133px;background:#d0d0dc;"></div>
<div class="b" style="left:874px;top:0px;width:1px;height:133px;background:#d0d0dc;"></div>
<div class="b" style="left:933px;top:0px;width:1px;height:133px;background:#d0d0dc;"></div>
<div class="b" style="left:992px;top:0px;width:1px;height:133px;background:#d0d0dc;"></div>
</div>
<div class="b" style="left:1058px;top:774px;width:16px;height:130px;background:#d1d6e5;"></div>
<svg class="b" style="left:1061px;top:779px" width="10" height="6" viewBox="0 0 10 6"><path d="M0 5 H9 L4.5 0.3 Z" fill="#64749a"/></svg>
<svg class="b" style="left:1061px;top:894px" width="10" height="6" viewBox="0 0 10 6"><path d="M0 0.5 H9 L4.5 5.2 Z" fill="#64749a"/></svg>
<div class="b" style="left:1061px;top:840px;width:9px;height:17px;background:#9aa6ba;"></div>
<svg class="b" style="left:535px;top:909px" width="17" height="5" viewBox="0 0 17 5"><rect x="0" y="0" width="1" height="1" fill="#65749a"/><rect x="4" y="0" width="1" height="1" fill="#65749a"/><rect x="8" y="0" width="1" height="1" fill="#65749a"/><rect x="12" y="0" width="1" height="1" fill="#65749a"/><rect x="16" y="0" width="1" height="1" fill="#65749a"/><rect x="2" y="0" width="1" height="1" fill="#e6e9f2"/><rect x="6" y="0" width="1" height="1" fill="#e6e9f2"/><rect x="10" y="0" width="1" height="1" fill="#e6e9f2"/><rect x="14" y="0" width="1" height="1" fill="#e6e9f2"/><rect x="2" y="2" width="1" height="1" fill="#65749a"/><rect x="6" y="2" width="1" height="1" fill="#65749a"/><rect x="10" y="2" width="1" height="1" fill="#65749a"/><rect x="14" y="2" width="1" height="1" fill="#65749a"/><rect x="0" y="2" width="1" height="1" fill="#e6e9f2"/><rect x="4" y="2" width="1" height="1" fill="#e6e9f2"/><rect x="8" y="2" width="1" height="1" fill="#e6e9f2"/><rect x="12" y="2" width="1" height="1" fill="#e6e9f2"/><rect x="16" y="2" width="1" height="1" fill="#e6e9f2"/><rect x="0" y="4" width="1" height="1" fill="#65749a"/><rect x="4" y="4" width="1" height="1" fill="#65749a"/><rect x="8" y="4" width="1" height="1" fill="#65749a"/><rect x="12" y="4" width="1" height="1" fill="#65749a"/><rect x="16" y="4" width="1" height="1" fill="#65749a"/><rect x="2" y="4" width="1" height="1" fill="#e6e9f2"/><rect x="6" y="4" width="1" height="1" fill="#e6e9f2"/><rect x="10" y="4" width="1" height="1" fill="#e6e9f2"/><rect x="14" y="4" width="1" height="1" fill="#e6e9f2"/></svg>
<div class="b" style="left:11px;top:918px;width:1066px;height:24px;background:#d0d6e7;"></div>
<span class="t" style="left:20px;top:923px;line-height:14px;color:#1b2236;">Trade Analysis</span>
<div class="b" style="left:105px;top:919px;width:150px;height:20px;background:#fff;border:1px solid #a3acc4;box-sizing:border-box;"></div>
<span class="t" style="left:110px;top:923px;line-height:14px;color:#0c0c18;">Combined</span>
<svg class="b" style="left:242px;top:927px" width="9" height="5" viewBox="0 0 9 5"><path d="M0.5 0.5 H7.5 L4 4.5 Z" fill="#55607e"/></svg>
<div class="b" style="left:263px;top:919px;width:80px;height:20px;background:#fff;border:1px solid #a3acc4;box-sizing:border-box;"></div>
<span class="t" style="left:268px;top:923px;line-height:14px;color:#0c0c18;">Auto</span>
<svg class="b" style="left:330px;top:927px" width="9" height="5" viewBox="0 0 9 5"><path d="M0.5 0.5 H7.5 L4 4.5 Z" fill="#55607e"/></svg>
<div class="b" style="left:931px;top:917px;width:145px;height:21px;background:#dde2ee;"></div>
<div class="b" style="left:932px;top:922px;width:13px;height:13px;background:#fff;border:1px solid #98a2ba;box-sizing:border-box;"></div>
<span class="t" style="left:949px;top:922px;line-height:14px;color:#1b2236;letter-spacing:0.25px;word-spacing:1.5px;">Ignore Today's Trades</span>
<div class="b" style="left:13px;top:942px;width:1063px;height:60px;background:#fff;border:1px solid #97a2b8;box-sizing:border-box;"></div>
<div class="b" style="left:14px;top:943px;width:1061px;height:20px;background:#f8f9fd;"></div>
<div class="b" style="left:14px;top:963px;width:1061px;height:1px;background:#cdd1e2;"></div>
<div class="b" style="left:14px;top:982px;width:1061px;height:1px;background:#cdd1e2;"></div>
<div class="b" style="left:94px;top:943px;width:1px;height:59px;background:#cdd1e2;"></div>
<div class="b" style="left:175px;top:943px;width:1px;height:59px;background:#cdd1e2;"></div>
<div class="b" style="left:256px;top:943px;width:1px;height:59px;background:#cdd1e2;"></div>
<div class="b" style="left:337px;top:943px;width:1px;height:59px;background:#cdd1e2;"></div>
<div class="b" style="left:418px;top:943px;width:1px;height:59px;background:#cdd1e2;"></div>
<div class="b" style="left:499px;top:943px;width:1px;height:59px;background:#cdd1e2;"></div>
<div class="b" style="left:580px;top:943px;width:1px;height:59px;background:#cdd1e2;"></div>
<div class="b" style="left:661px;top:943px;width:1px;height:59px;background:#cdd1e2;"></div>
<div class="b" style="left:742px;top:943px;width:1px;height:59px;background:#cdd1e2;"></div>
<div class="b" style="left:823px;top:943px;width:1px;height:59px;background:#cdd1e2;"></div>
<div class="b" style="left:904px;top:943px;width:1px;height:59px;background:#cdd1e2;"></div>
<div class="b" style="left:985px;top:943px;width:1px;height:59px;background:#cdd1e2;"></div>
<span class="t" style="left:-96.0px;width:300px;text-align:center;top:946px;line-height:14px;color:#1b2236;">Analysis</span>
<span class="t" style="left:-15.0px;width:300px;text-align:center;top:946px;line-height:14px;color:#1b2236;">Margin</span>
<span class="t" style="left:66.0px;width:300px;text-align:center;top:946px;line-height:14px;color:#1b2236;">Cost</span>
<span class="t" style="left:147.0px;width:300px;text-align:center;top:946px;line-height:14px;color:#1b2236;">Curr Cost</span>
<span class="t" style="left:228.0px;width:300px;text-align:center;top:946px;line-height:14px;color:#1b2236;">Commission</span>
<span class="t" style="left:309.0px;width:300px;text-align:center;top:946px;line-height:14px;color:#1b2236;">PnL</span>
<span class="t" style="left:390.0px;width:300px;text-align:center;top:946px;line-height:14px;color:#1b2236;">PnL%</span>
<span class="t" style="left:471.0px;width:300px;text-align:center;top:946px;line-height:14px;color:#1b2236;">Delta</span>
<span class="t" style="left:552.0px;width:300px;text-align:center;top:946px;line-height:14px;color:#1b2236;">Gamma</span>
<span class="t" style="left:633.0px;width:300px;text-align:center;top:946px;line-height:14px;color:#1b2236;">Theta</span>
<span class="t" style="left:714.0px;width:300px;text-align:center;top:946px;line-height:14px;color:#1b2236;">Vega</span>
<span class="t" style="left:795.0px;width:300px;text-align:center;top:946px;line-height:14px;color:#1b2236;">T/D</span>
<span class="t" style="left:880.5px;width:300px;text-align:center;top:946px;line-height:14px;color:#1b2236;">Plot</span>
<svg class="b" style="left:16px;top:968px" width="10" height="10" viewBox="0 0 10 10"><rect x="0.5" y="0.5" width="8" height="8" fill="#fff" stroke="#555"/><path d="M2.5 4.5 H6.5 M4.5 2.5 V6.5" stroke="#333"/></svg>
<span class="t" style="left:32px;top:967px;line-height:14px;color:#1470dc;">Position</span>
<span class="t" style="right:1740px;top:967px;line-height:14px;color:#0a0a0a;">325.00</span>
<span class="t" style="right:1659px;top:967px;line-height:14px;color:#0a0a0a;">-325.00</span>
<span class="t" style="right:1578px;top:967px;line-height:14px;color:#0a0a0a;">794.00</span>
<span class="t" style="right:1497px;top:967px;line-height:14px;color:#0a0a0a;">7.00</span>
<span class="t" style="right:1416px;top:967px;line-height:14px;color:#1e8c1e;">469.00</span>
<span class="t" style="right:1335px;top:967px;line-height:14px;color:#1e8c1e;">144.31%</span>
<span class="t" style="right:1254px;top:967px;line-height:14px;color:#0a0a0a;">172.65</span>
<span class="t" style="right:1173px;top:967px;line-height:14px;color:#0a0a0a;">-5.92</span>
<span class="t" style="right:1092px;top:967px;line-height:14px;color:#0a0a0a;">26.67</span>
<span class="t" style="right:1011px;top:967px;line-height:14px;color:#0a0a0a;">-1.46</span>
<span class="t" style="right:930px;top:967px;line-height:14px;color:#0a0a0a;">0.2</span>
<svg class="b" style="left:1024px;top:966px" width="14" height="14" viewBox="0 0 14 14"><rect x="0.5" y="0.5" width="12" height="12" fill="#fff" stroke="#98a2ba"/><path d="M3 6.5 L5.5 9.5 L10 3" stroke="#6a7088" stroke-width="1.3" fill="none"/></svg>
<svg class="b" style="left:16px;top:987px" width="10" height="10" viewBox="0 0 10 10"><rect x="0.5" y="0.5" width="8" height="8" fill="#fff" stroke="#555"/><path d="M2.5 4.5 H6.5 M4.5 2.5 V6.5" stroke="#333"/></svg>
<span class="t" style="left:32px;top:986px;line-height:14px;color:#1f8400;">Model</span>
<span class="t" style="right:1740px;top:986px;line-height:14px;color:#0a0a0a;">0.00</span>
<span class="t" style="right:1659px;top:986px;line-height:14px;color:#0a0a0a;">125.00</span>
<span class="t" style="right:1578px;top:986px;line-height:14px;color:#0a0a0a;">330.00</span>
<span class="t" style="right:1497px;top:986px;line-height:14px;color:#0a0a0a;">21.00</span>
<span class="t" style="right:1416px;top:986px;line-height:14px;color:#1e8c1e;">455.00</span>
<span class="t" style="right:1335px;top:986px;line-height:14px;color:#1e8c1e;">0.00%</span>
<span class="t" style="right:1254px;top:986px;line-height:14px;color:#0a0a0a;">92.15</span>
<span class="t" style="right:1173px;top:986px;line-height:14px;color:#0a0a0a;">10.81</span>
<span class="t" style="right:1092px;top:986px;line-height:14px;color:#0a0a0a;">2.27</span>
<span class="t" style="right:1011px;top:986px;line-height:14px;color:#0a0a0a;">0.86</span>
<span class="t" style="right:930px;top:986px;line-height:14px;color:#0a0a0a;">0</span>
<svg class="b" style="left:1024px;top:985px" width="14" height="14" viewBox="0 0 14 14"><rect x="0.5" y="0.5" width="12" height="12" fill="#fff" stroke="#98a2ba"/><path d="M3 6.5 L5.5 9.5 L10 3" stroke="#6a7088" stroke-width="1.3" fill="none"/></svg>
<svg class="b" style="left:1080px;top:575px" width="5" height="17" viewBox="0 0 5 17"><rect x="0" y="0" width="1" height="1" fill="#65749a"/><rect x="0" y="4" width="1" height="1" fill="#65749a"/><rect x="0" y="8" width="1" height="1" fill="#65749a"/><rect x="0" y="12" width="1" height="1" fill="#65749a"/><rect x="0" y="16" width="1" height="1" fill="#65749a"/><rect x="0" y="2" width="1" height="1" fill="#e6e9f2"/><rect x="0" y="6" width="1" height="1" fill="#e6e9f2"/><rect x="0" y="10" width="1" height="1" fill="#e6e9f2"/><rect x="0" y="14" width="1" height="1" fill="#e6e9f2"/><rect x="2" y="2" width="1" height="1" fill="#65749a"/><rect x="2" y="6" width="1" height="1" fill="#65749a"/><rect x="2" y="10" width="1" height="1" fill="#65749a"/><rect x="2" y="14" width="1" height="1" fill="#65749a"/><rect x="2" y="0" width="1" height="1" fill="#e6e9f2"/><rect x="2" y="4" width="1" height="1" fill="#e6e9f2"/><rect x="2" y="8" width="1" height="1" fill="#e6e9f2"/><rect x="2" y="12" width="1" height="1" fill="#e6e9f2"/><rect x="2" y="16" width="1" height="1" fill="#e6e9f2"/><rect x="4" y="0" width="1" height="1" fill="#65749a"/><rect x="4" y="4" width="1" height="1" fill="#65749a"/><rect x="4" y="8" width="1" height="1" fill="#65749a"/><rect x="4" y="12" width="1" height="1" fill="#65749a"/><rect x="4" y="16" width="1" height="1" fill="#65749a"/><rect x="4" y="2" width="1" height="1" fill="#e6e9f2"/><rect x="4" y="6" width="1" height="1" fill="#e6e9f2"/><rect x="4" y="10" width="1" height="1" fill="#e6e9f2"/><rect x="4" y="14" width="1" height="1" fill="#e6e9f2"/></svg>
<div class="b" style="left:1088px;top:191px;width:820px;height:1px;background:#909cb6;"></div>
<div class="b" style="left:1088px;top:165px;width:77px;height:27px;background:#d6dbe9;border:1px solid #909cb6;border-bottom:none;box-sizing:border-box;"></div>
<span class="t" style="left:1100px;top:171px;line-height:14px;color:#1b2236;">Risk Chart</span>
<div class="b" style="left:1165px;top:165px;width:80px;height:27px;background:#ccd2e3;border:1px solid #909cb6;box-sizing:border-box;"></div>
<span class="t" style="left:1175px;top:171px;line-height:14px;color:#1b2236;">Price Chart</span>
<div class="b" style="left:1245px;top:165px;width:125px;height:27px;background:#ccd2e3;border:1px solid #909cb6;box-sizing:border-box;"></div>
<span class="t" style="left:1256px;top:171px;line-height:14px;color:#1b2236;">Movement Analysis</span>
<div class="b" style="left:1370px;top:165px;width:67px;height:27px;background:#ccd2e3;border:1px solid #909cb6;box-sizing:border-box;"></div>
<span class="t" style="left:1381px;top:171px;line-height:14px;color:#1b2236;">Volatility</span>
<div class="b" style="left:1437px;top:165px;width:161px;height:27px;background:#ccd2e3;border:1px solid #909cb6;box-sizing:border-box;"></div>
<span class="t" style="left:1448px;top:171px;line-height:14px;color:#1b2236;">Statistics &amp; Fundamentals</span>
<div class="b" style="left:1088px;top:191px;width:1px;height:811px;background:#909cb6;"></div>
<div class="b" style="left:1907px;top:191px;width:1px;height:811px;background:#909cb6;"></div>
<span class="t" style="left:1095px;top:198px;line-height:14px;color:#1b2236;">Vol Adjust</span>
<div class="b" style="left:1156px;top:194px;width:53px;height:20px;background:#fff;border:1px solid #a3acc4;box-sizing:border-box;"></div>
<span class="t" style="right:724px;top:198px;line-height:14px;color:#0c0c18;">0</span>
<svg class="b" style="left:1195px;top:197px" width="10" height="15" viewBox="0 0 10 15"><path d="M1 5.5 H8 L4.5 1 Z M1 9.5 H8 L4.5 14 Z" fill="#55607e"/></svg>
<span class="t" style="left:1660px;top:198px;line-height:14px;color:#1b2236;">Projection</span>
<div class="b" style="left:1720px;top:194px;width:180px;height:21px;background:#fff;border:1px solid #a3acc4;box-sizing:border-box;"></div>
<span class="t" style="left:1724px;top:198px;line-height:14px;color:#0c0c18;">12/03/2026</span>
<svg class="b" style="left:1797px;top:202px" width="9" height="5" viewBox="0 0 9 5"><path d="M0.5 0.5 H7.5 L4 4.5 Z" fill="#7a86a4"/></svg>
<span class="t" style="left:1816px;top:198px;line-height:14px;color:#0c0c18;">T+0</span>
<span class="t" style="left:1845px;top:198px;line-height:14px;color:#0c0c18;">3Ln</span>
<svg class="b" style="left:1872px;top:199px" width="8" height="11" viewBox="0 0 8 11"><path d="M6.5 0.8 V9.8 L1 5.3 Z" fill="#111"/></svg>
<svg class="b" style="left:1888px;top:199px" width="8" height="11" viewBox="0 0 8 11"><path d="M1 0.8 V9.8 L6.5 5.3 Z" fill="#111"/></svg>
<svg class="b" style="left:1089px;top:217px;will-change:transform" width="817" height="759" viewBox="1089 217 817 759"><rect x="1089" y="217" width="817" height="759" fill="#fff"/><rect x="1352" y="235.5" width="284.6" height="531" fill="#92cddc"/><rect x="1423" y="235.5" width="142.7" height="531" fill="#4f81bd"/><text transform="translate(1363.9,266) rotate(-90)" font-size="11" fill="#4f81bd" font-family="Liberation Sans, sans-serif">21.58</text><text transform="translate(1435.1,266) rotate(-90)" font-size="11" fill="#92cddc" font-family="Liberation Sans, sans-serif">22.91</text><text transform="translate(1564.5,266) rotate(-90)" font-size="11" fill="#92cddc" font-family="Liberation Sans, sans-serif">25.55</text><text transform="translate(1634.6,266) rotate(-90)" font-size="11" fill="#4f81bd" font-family="Liberation Sans, sans-serif">26.88</text><line x1="1161.5" x2="1161.5" y1="231.5" y2="771" stroke="#dadada"/><line x1="1214.5" x2="1214.5" y1="231.5" y2="771" stroke="#dadada"/><line x1="1268.5" x2="1268.5" y1="231.5" y2="771" stroke="#dadada"/><line x1="1321.5" x2="1321.5" y1="231.5" y2="771" stroke="#dadada"/><line x1="1375.5" x2="1375.5" y1="231.5" y2="771" stroke="#dadada"/><line x1="1428.5" x2="1428.5" y1="231.5" y2="771" stroke="#dadada"/><line x1="1482.5" x2="1482.5" y1="231.5" y2="771" stroke="#dadada"/><line x1="1536.5" x2="1536.5" y1="231.5" y2="771" stroke="#dadada"/><line x1="1589.5" x2="1589.5" y1="231.5" y2="771" stroke="#dadada"/><line x1="1643.5" x2="1643.5" y1="231.5" y2="771" stroke="#dadada"/><line x1="1696.5" x2="1696.5" y1="231.5" y2="771" stroke="#dadada"/><line x1="1750.5" x2="1750.5" y1="231.5" y2="771" stroke="#dadada"/><line x1="1803.5" x2="1803.5" y1="231.5" y2="771" stroke="#dadada"/><line x1="1140" x2="1856" y1="235.5" y2="235.5" stroke="#dadada"/><line x1="1140" x2="1856" y1="260.5" y2="260.5" stroke="#dadada"/><line x1="1140" x2="1856" y1="286.5" y2="286.5" stroke="#dadada"/><line x1="1140" x2="1856" y1="311.5" y2="311.5" stroke="#dadada"/><line x1="1140" x2="1856" y1="336.5" y2="336.5" stroke="#dadada"/><line x1="1140" x2="1856" y1="361.5" y2="361.5" stroke="#dadada"/><line x1="1140" x2="1856" y1="387.5" y2="387.5" stroke="#dadada"/><line x1="1140" x2="1856" y1="412.5" y2="412.5" stroke="#dadada"/><line x1="1140" x2="1856" y1="437.5" y2="437.5" stroke="#dadada"/><line x1="1140" x2="1856" y1="463.5" y2="463.5" stroke="#dadada"/><line x1="1140" x2="1856" y1="488.5" y2="488.5" stroke="#dadada"/><line x1="1140" x2="1856" y1="513.5" y2="513.5" stroke="#dadada"/><line x1="1140" x2="1856" y1="538.5" y2="538.5" stroke="#dadada"/><line x1="1140" x2="1856" y1="564.5" y2="564.5" stroke="#dadada"/><line x1="1140" x2="1856" y1="589.5" y2="589.5" stroke="#dadada"/><line x1="1140" x2="1856" y1="614.5" y2="614.5" stroke="#dadada"/><line x1="1140" x2="1856" y1="640.5" y2="640.5" stroke="#dadada"/><line x1="1140" x2="1856" y1="665.5" y2="665.5" stroke="#dadada"/><line x1="1140" x2="1856" y1="690.5" y2="690.5" stroke="#dadada"/><line x1="1140" x2="1856" y1="715.5" y2="715.5" stroke="#dadada"/><line x1="1140" x2="1856" y1="741.5" y2="741.5" stroke="#dadada"/><line x1="1140" x2="1856" y1="766.5" y2="766.5" stroke="#dadada"/><line x1="1144.5" x2="1144.5" y1="235.5" y2="766.5" stroke="#dadada"/><line x1="1851.5" x2="1851.5" y1="235.5" y2="766.5" stroke="#dadada"/><line x1="1145" x2="1851" y1="665.5" y2="665.5" stroke="#000" stroke-width="1"/><clipPath id="pc"><rect x="1145" y="236" width="706.5" height="531"/></clipPath><g clip-path="url(#pc)" fill="none"><line x1="1516" y1="576" x2="1585.5" y2="520" stroke="#f2b48c" stroke-opacity="0.68" stroke-width="6.5"/><path d="M1145.0 633.0 C1174.3 632.9 1282.7 632.9 1321.0 632.4 C1359.3 631.9 1357.0 631.4 1375.0 629.8 C1393.0 628.2 1410.8 626.4 1428.7 623.0 C1446.6 619.6 1464.4 615.1 1482.3 609.5 C1500.2 603.9 1518.2 597.5 1536.0 589.3 C1553.8 581.0 1572.6 570.1 1589.4 560.0 C1606.2 549.9 1619.2 541.7 1637.0 528.5 C1654.8 515.3 1677.3 495.8 1696.3 481.0 C1715.3 466.2 1733.7 453.0 1751.0 440.0 C1768.3 427.0 1783.3 415.4 1800.0 403.0 C1816.7 390.6 1842.5 372.0 1851.0 365.8" stroke="#8a8a8a" stroke-width="1.1"/><path d="M1145.0 633.0 C1156.7 632.9 1194.5 632.8 1215.0 632.5 C1235.5 632.2 1250.3 632.1 1268.0 631.3 C1285.7 630.5 1303.2 629.3 1321.0 627.6 C1338.8 625.9 1357.0 623.8 1375.0 621.0 C1393.0 618.2 1410.8 615.4 1428.7 611.0 C1446.6 606.6 1464.4 600.9 1482.3 594.7 C1500.2 588.5 1518.2 581.2 1536.0 573.9 C1553.8 566.6 1572.6 559.0 1589.4 550.8 C1606.2 542.6 1619.2 534.7 1637.0 524.5 C1654.8 514.3 1675.8 501.5 1696.3 489.4 C1716.8 477.3 1734.2 467.6 1760.0 452.0 C1785.8 436.4 1835.8 405.3 1851.0 396.0" stroke="#f04848" stroke-width="1.3"/><path d="M1145.0 632.6 C1156.7 632.4 1194.5 631.9 1215.0 631.3 C1235.5 630.6 1250.3 629.9 1268.0 628.7 C1285.7 627.5 1303.2 626.1 1321.0 624.0 C1338.8 621.9 1357.0 619.2 1375.0 616.0 C1393.0 612.8 1410.8 609.3 1428.7 605.0 C1446.6 600.7 1464.4 595.8 1482.3 590.0 C1500.2 584.2 1518.2 577.1 1536.0 570.5 C1553.8 563.9 1572.6 557.8 1589.4 550.4 C1606.2 543.0 1619.2 535.3 1637.0 526.3 C1654.8 517.3 1675.8 506.6 1696.3 496.6 C1716.8 486.6 1734.2 479.3 1760.0 466.3 C1785.8 453.3 1835.8 426.5 1851.0 418.5" stroke="#22e022" stroke-width="1.3"/><polyline points="1480.0,597.8 1500.0,579.0 1600.0,485.0 1648.0,440.3 1700.0,393.5 1750.0,350.0 1800.0,307.4 1851.0,266.6" stroke="#8a8a8a" stroke-width="1.1"/><polyline points="1145.0,748.0 1321.0,748.6 1416.0,660.4 1500.0,583.0 1589.0,503.9 1665.6,440.0 1750.0,372.7 1800.0,334.4 1851.0,297.0" stroke="#f04848" stroke-width="1.2"/><polyline points="1145.0,749.2 1321.0,750.0 1405.6,670.0" stroke="#ffdcdc" stroke-width="1"/><polyline points="1145.0,749.6 1321.0,751.3 1405.6,674.0" stroke="#f02828" stroke-width="1.1"/><polyline points="1405.6,674.0 1429.6,652.9" stroke="#6a9cf0" stroke-width="1.3"/><polyline points="1429.6,653.0 1482.3,609.0 1536.0,564.5 1589.4,521.0 1637.0,481.5 1687.5,440.0 1750.0,393.7 1800.0,358.4 1851.0,324.0" stroke="#22e022" stroke-width="1.3"/><polyline points="1145.0,633.0 1536.0,633.0 1851.0,335.0" stroke="#0a7d0a" stroke-width="2.1" stroke-linejoin="round"/><polyline points="1145.0,747.2 1321.0,747.2 1851.0,246.2" stroke="#4040c6" stroke-width="2.0" stroke-linejoin="round"/></g><circle cx="1589.4" cy="550.4" r="4.3" fill="#00e8f0" stroke="#0a1a2a" stroke-width="1"/><g font-size="11" fill="#111" font-family="Liberation Sans, sans-serif"><text x="1161.5" y="229" text-anchor="middle">-25.7%</text><text x="1214.5" y="229" text-anchor="middle">-21.6%</text><text x="1268.5" y="229" text-anchor="middle">-17.5%</text><text x="1321.5" y="229" text-anchor="middle">-13.3%</text><text x="1375.5" y="229" text-anchor="middle">-9.2%</text><text x="1428.5" y="229" text-anchor="middle">-5.1%</text><text x="1482.5" y="229" text-anchor="middle">-0.9%</text><text x="1536.5" y="229" text-anchor="middle">3.2%</text><text x="1589.5" y="229" text-anchor="middle">7.3%</text><text x="1643.5" y="229" text-anchor="middle">11.4%</text><text x="1696.5" y="229" text-anchor="middle">15.6%</text><text x="1750.5" y="229" text-anchor="middle">19.7%</text><text x="1803.5" y="229" text-anchor="middle">23.8%</text><rect x="1574.5" y="217.5" width="29" height="13" fill="none" stroke="#222"/><text x="1162.0" y="783" text-anchor="middle">18</text><text x="1215.0" y="783" text-anchor="middle">19</text><text x="1269.0" y="783" text-anchor="middle">20</text><text x="1322.0" y="783" text-anchor="middle">21</text><text x="1376.0" y="783" text-anchor="middle">22</text><text x="1429.0" y="783" text-anchor="middle">23</text><text x="1483.0" y="783" text-anchor="middle">24</text><text x="1537.0" y="783" text-anchor="middle">25</text><text x="1644.0" y="783" text-anchor="middle">27</text><text x="1697.0" y="783" text-anchor="middle">28</text><text x="1751.0" y="783" text-anchor="middle">29</text><text x="1804.0" y="783" text-anchor="middle">30</text><text x="1137.5" y="240.0" text-anchor="end">523%</text><text x="1859.5" y="240.0">1,700</text><text x="1137.5" y="265.0" text-anchor="end">492%</text><text x="1859.5" y="265.0">1,600</text><text x="1137.5" y="291.0" text-anchor="end">462%</text><text x="1859.5" y="291.0">1,500</text><text x="1137.5" y="316.0" text-anchor="end">431%</text><text x="1859.5" y="316.0">1,400</text><text x="1137.5" y="341.0" text-anchor="end">400%</text><text x="1859.5" y="341.0">1,300</text><text x="1137.5" y="366.0" text-anchor="end">369%</text><text x="1859.5" y="366.0">1,200</text><text x="1137.5" y="392.0" text-anchor="end">338%</text><text x="1859.5" y="392.0">1,100</text><text x="1137.5" y="417.0" text-anchor="end">308%</text><text x="1859.5" y="417.0">1,000</text><text x="1137.5" y="442.0" text-anchor="end">277%</text><text x="1859.5" y="442.0">900</text><text x="1137.5" y="468.0" text-anchor="end">246%</text><text x="1859.5" y="468.0">800</text><text x="1137.5" y="493.0" text-anchor="end">215%</text><text x="1859.5" y="493.0">700</text><text x="1137.5" y="518.0" text-anchor="end">185%</text><text x="1859.5" y="518.0">600</text><text x="1137.5" y="543.0" text-anchor="end">154%</text><text x="1859.5" y="543.0">500</text><text x="1137.5" y="569.0" text-anchor="end">123%</text><text x="1859.5" y="569.0">400</text><text x="1137.5" y="594.0" text-anchor="end">92%</text><text x="1859.5" y="594.0">300</text><text x="1137.5" y="619.0" text-anchor="end">62%</text><text x="1859.5" y="619.0">200</text><text x="1137.5" y="645.0" text-anchor="end">31%</text><text x="1859.5" y="645.0">100</text><text x="1137.5" y="670.0" text-anchor="end">0%</text><text x="1859.5" y="670.0">0</text><text x="1137.5" y="695.0" text-anchor="end">-31%</text><text x="1859.5" y="695.0">-100</text><text x="1137.5" y="720.0" text-anchor="end">-62%</text><text x="1859.5" y="720.0">-200</text><text x="1137.5" y="746.0" text-anchor="end">-92%</text><text x="1859.5" y="746.0">-300</text><text x="1137.5" y="771.0" text-anchor="end">-123%</text><text x="1859.5" y="771.0">-400</text></g><rect x="1095" y="543" width="44.5" height="14" fill="#008000"/><rect x="1856" y="543" width="47" height="14" fill="#008000"/><text x="1137.5" y="554.5" text-anchor="end" font-size="11" fill="#fff" font-family="Liberation Sans, sans-serif">140%</text><text x="1859.5" y="554.5" font-size="11" fill="#fff" font-family="Liberation Sans, sans-serif">455</text><rect x="1149.5" y="240.5" width="160" height="112" rx="5" fill="#eaf0fa" fill-opacity="0.93" stroke="#64748f"/><rect x="1157" y="248" width="4" height="13" fill="#f83838"/><text x="1161.5" y="258.7" font-size="11.4" fill="#505050" font-family="Liberation Sans, sans-serif">-7.00 Realized PnL</text><rect x="1157" y="262" width="4" height="13" fill="#58cc58"/><text x="1161.5" y="272.7" font-size="11.4" fill="#505050" font-family="Liberation Sans, sans-serif">-2</text><text x="1175.6" y="272.7" font-size="11.4" fill="#ff4848" font-family="Liberation Sans, sans-serif">18mar. 21 Call Δ</text><text x="1300" y="272.7" font-size="11.4" fill="#ff4848" text-anchor="end" font-family="Liberation Sans, sans-serif">99.99</text><rect x="1157" y="276" width="4" height="13" fill="#58cc58"/><text x="1161.5" y="286.7" font-size="11.4" fill="#505050" font-family="Liberation Sans, sans-serif">+2</text><text x="1177.6" y="286.7" font-size="11.4" fill="#4848ff" font-family="Liberation Sans, sans-serif">18mar. 37 Call Δ</text><text x="1302" y="286.7" font-size="11.4" fill="#4848ff" text-anchor="end" font-family="Liberation Sans, sans-serif">13.63</text><rect x="1157" y="290" width="4" height="13" fill="#58cc58"/><text x="1161.5" y="300.7" font-size="11.4" fill="#505050" font-family="Liberation Sans, sans-serif">+2</text><text x="1177.6" y="300.7" font-size="11.4" fill="#4848ff" font-family="Liberation Sans, sans-serif">18mar. 25 Call Δ</text><text x="1302" y="300.7" font-size="11.4" fill="#4848ff" text-anchor="end" font-family="Liberation Sans, sans-serif">62.71</text><rect x="1157" y="304" width="4" height="13" fill="#58cc58"/><text x="1161.5" y="314.7" font-size="11.4" fill="#505050" font-family="Liberation Sans, sans-serif">-2</text><text x="1175.6" y="314.7" font-size="11.4" fill="#ff4848" font-family="Liberation Sans, sans-serif">18mar. 35 Call Δ</text><text x="1300" y="314.7" font-size="11.4" fill="#ff4848" text-anchor="end" font-family="Liberation Sans, sans-serif">16.53</text><rect x="1157" y="318" width="4" height="13" fill="#88a8ec"/><text x="1161.5" y="328.7" font-size="11.4" fill="#505050" font-family="Liberation Sans, sans-serif">+2</text><text x="1177.6" y="328.7" font-size="11.4" fill="#4848ff" font-family="Liberation Sans, sans-serif">18mar. 21 Call Δ</text><text x="1302" y="328.7" font-size="11.4" fill="#4848ff" text-anchor="end" font-family="Liberation Sans, sans-serif">99.99</text><rect x="1157" y="332" width="4" height="13" fill="#88a8ec"/><text x="1161.5" y="342.7" font-size="11.4" fill="#505050" font-family="Liberation Sans, sans-serif">-2</text><text x="1175.6" y="342.7" font-size="11.4" fill="#ff4848" font-family="Liberation Sans, sans-serif">18mar. 37 Call Δ</text><text x="1300" y="342.7" font-size="11.4" fill="#ff4848" text-anchor="end" font-family="Liberation Sans, sans-serif">13.63</text><rect x="1712.5" y="240.5" width="136" height="45" rx="5" fill="#eaf0fa" fill-opacity="0.9" stroke="#64748f"/><text x="1724" y="257" font-size="11.5" font-weight="bold" fill="#505050" font-family="Liberation Sans, sans-serif">Comments</text><text x="1724" y="276" font-size="11.5" letter-spacing="0.12" fill="#505050" font-family="Liberation Sans, sans-serif">Trade Occurred Today</text><rect x="1149.5" y="691.5" width="109" height="70" rx="5" fill="#eaf0fa" fill-opacity="0.88" stroke="#64748f"/><text x="1157.5" y="710" font-size="11" fill="#48a848" font-family="Liberation Sans, sans-serif">18/03/2026 (0)</text><text x="1157.5" y="724" font-size="11" fill="#a8a8a8" font-family="Liberation Sans, sans-serif">16/03/2026 (2) T+4</text><text x="1157.5" y="738" font-size="11" fill="#f86868" font-family="Liberation Sans, sans-serif">14/03/2026 (4) T+2</text><text x="1157.5" y="752" font-size="11" fill="#58c858" font-family="Liberation Sans, sans-serif">12/03/2026 (6) T+0</text></svg>
<svg class="b" style="left:1089px;top:768px;will-change:transform" width="817" height="208" viewBox="1089 768 817 208"><rect x="1093.5" y="787.5" width="808.5" height="183.5" rx="6" fill="#eaf1f9" stroke="#4f5f7a"/><rect x="1144.8" y="814.0" width="43.4" height="1.5" fill="#5b7af8" stroke="#484848" stroke-width="0.9"/><rect x="1188.2" y="813.9" width="53.5" height="1.6" fill="#5b7af8" stroke="#484848" stroke-width="0.9"/><rect x="1241.7" y="813.8" width="53.5" height="1.7" fill="#5b7af8" stroke="#484848" stroke-width="0.9"/><rect x="1295.2" y="813.5" width="53.5" height="2.0" fill="#5b7af8" stroke="#484848" stroke-width="0.9"/><rect x="1348.7" y="813.2" width="53.5" height="2.3" fill="#5b7af8" stroke="#484848" stroke-width="0.9"/><rect x="1402.2" y="812.7" width="53.5" height="2.8" fill="#5b7af8" stroke="#484848" stroke-width="0.9"/><rect x="1455.7" y="811.9" width="53.5" height="3.6" fill="#5b7af8" stroke="#484848" stroke-width="0.9"/><rect x="1509.2" y="811.1" width="53.5" height="4.4" fill="#5b7af8" stroke="#484848" stroke-width="0.9"/><rect x="1562.7" y="810.0" width="53.5" height="5.5" fill="#5b7af8" stroke="#484848" stroke-width="0.9"/><rect x="1616.2" y="808.9" width="53.5" height="6.6" fill="#5b7af8" stroke="#484848" stroke-width="0.9"/><rect x="1669.7" y="807.6" width="53.5" height="7.9" fill="#5b7af8" stroke="#484848" stroke-width="0.9"/><rect x="1723.2" y="806.3" width="53.5" height="9.2" fill="#5b7af8" stroke="#484848" stroke-width="0.9"/><rect x="1776.7" y="805.0" width="76.3" height="10.5" fill="#5b7af8" stroke="#484848" stroke-width="0.9"/><line x1="1144.8" x2="1853" y1="815.5" y2="815.5" stroke="#484848" stroke-width="1.4"/><text x="1120" y="819.9" font-size="11" fill="#666" text-anchor="middle" font-family="Liberation Sans, sans-serif">PnL</text><text x="1879.5" y="819.9" font-size="11" fill="#666" text-anchor="middle" font-family="Liberation Sans, sans-serif">PnL</text><text x="1162.4" y="825.5" font-size="11" fill="#5c6cf4" text-anchor="middle" font-family="Liberation Sans, sans-serif">128</text><text x="1162.4" y="835.9" font-size="11" fill="#5c6cf4" text-anchor="middle" font-family="Liberation Sans, sans-serif">39%</text><text x="1215.9" y="825.5" font-size="11" fill="#5c6cf4" text-anchor="middle" font-family="Liberation Sans, sans-serif">133</text><text x="1215.9" y="835.9" font-size="11" fill="#5c6cf4" text-anchor="middle" font-family="Liberation Sans, sans-serif">41%</text><text x="1269.4" y="825.5" font-size="11" fill="#5c6cf4" text-anchor="middle" font-family="Liberation Sans, sans-serif">144</text><text x="1269.4" y="835.9" font-size="11" fill="#5c6cf4" text-anchor="middle" font-family="Liberation Sans, sans-serif">44%</text><text x="1322.9" y="825.5" font-size="11" fill="#5c6cf4" text-anchor="middle" font-family="Liberation Sans, sans-serif">163</text><text x="1322.9" y="835.9" font-size="11" fill="#5c6cf4" text-anchor="middle" font-family="Liberation Sans, sans-serif">50%</text><text x="1376.4" y="825.5" font-size="11" fill="#5c6cf4" text-anchor="middle" font-family="Liberation Sans, sans-serif">193</text><text x="1376.4" y="835.9" font-size="11" fill="#5c6cf4" text-anchor="middle" font-family="Liberation Sans, sans-serif">59%</text><text x="1429.9" y="825.5" font-size="11" fill="#5c6cf4" text-anchor="middle" font-family="Liberation Sans, sans-serif">237</text><text x="1429.9" y="835.9" font-size="11" fill="#5c6cf4" text-anchor="middle" font-family="Liberation Sans, sans-serif">73%</text><text x="1483.4" y="825.5" font-size="11" fill="#5c6cf4" text-anchor="middle" font-family="Liberation Sans, sans-serif">296</text><text x="1483.4" y="835.9" font-size="11" fill="#5c6cf4" text-anchor="middle" font-family="Liberation Sans, sans-serif">91%</text><text x="1536.9" y="825.5" font-size="11" fill="#5c6cf4" text-anchor="middle" font-family="Liberation Sans, sans-serif">369</text><text x="1536.9" y="835.9" font-size="11" fill="#5c6cf4" text-anchor="middle" font-family="Liberation Sans, sans-serif">114%</text><text x="1643.9" y="825.5" font-size="11" fill="#5c6cf4" text-anchor="middle" font-family="Liberation Sans, sans-serif">553</text><text x="1643.9" y="835.9" font-size="11" fill="#5c6cf4" text-anchor="middle" font-family="Liberation Sans, sans-serif">170%</text><text x="1697.4" y="825.5" font-size="11" fill="#5c6cf4" text-anchor="middle" font-family="Liberation Sans, sans-serif">658</text><text x="1697.4" y="835.9" font-size="11" fill="#5c6cf4" text-anchor="middle" font-family="Liberation Sans, sans-serif">202%</text><text x="1750.9" y="825.5" font-size="11" fill="#5c6cf4" text-anchor="middle" font-family="Liberation Sans, sans-serif">768</text><text x="1750.9" y="835.9" font-size="11" fill="#5c6cf4" text-anchor="middle" font-family="Liberation Sans, sans-serif">236%</text><text x="1804.4" y="825.5" font-size="11" fill="#5c6cf4" text-anchor="middle" font-family="Liberation Sans, sans-serif">879</text><text x="1804.4" y="835.9" font-size="11" fill="#5c6cf4" text-anchor="middle" font-family="Liberation Sans, sans-serif">270%</text><rect x="1188.2" y="856.9" width="53.5" height="0.7" fill="#5b7af8" stroke="#484848" stroke-width="0.9"/><rect x="1241.7" y="856.3" width="53.5" height="1.3" fill="#5b7af8" stroke="#484848" stroke-width="0.9"/><rect x="1295.2" y="855.4" width="53.5" height="2.2" fill="#5b7af8" stroke="#484848" stroke-width="0.9"/><rect x="1348.7" y="854.2" width="53.5" height="3.4" fill="#5b7af8" stroke="#484848" stroke-width="0.9"/><rect x="1402.2" y="852.9" width="53.5" height="4.7" fill="#5b7af8" stroke="#484848" stroke-width="0.9"/><rect x="1455.7" y="851.5" width="53.5" height="6.1" fill="#5b7af8" stroke="#484848" stroke-width="0.9"/><rect x="1509.2" y="850.2" width="53.5" height="7.4" fill="#5b7af8" stroke="#484848" stroke-width="0.9"/><rect x="1562.7" y="849.1" width="53.5" height="8.5" fill="#5b7af8" stroke="#484848" stroke-width="0.9"/><rect x="1616.2" y="848.3" width="53.5" height="9.3" fill="#5b7af8" stroke="#484848" stroke-width="0.9"/><rect x="1669.7" y="847.7" width="53.5" height="9.9" fill="#5b7af8" stroke="#484848" stroke-width="0.9"/><rect x="1723.2" y="847.4" width="53.5" height="10.2" fill="#5b7af8" stroke="#484848" stroke-width="0.9"/><rect x="1776.7" y="847.4" width="76.3" height="10.2" fill="#5b7af8" stroke="#484848" stroke-width="0.9"/><line x1="1144.8" x2="1853" y1="857.6" y2="857.6" stroke="#484848" stroke-width="1.4"/><text x="1120" y="862.0" font-size="11" fill="#666" text-anchor="middle" font-family="Liberation Sans, sans-serif">Delta</text><text x="1879.5" y="862.0" font-size="11" fill="#666" text-anchor="middle" font-family="Liberation Sans, sans-serif">Delta</text><text x="1162.4" y="867.6" font-size="11" fill="#5c6cf4" text-anchor="middle" font-family="Liberation Sans, sans-serif">3.29</text><text x="1215.9" y="867.6" font-size="11" fill="#5c6cf4" text-anchor="middle" font-family="Liberation Sans, sans-serif">7.54</text><text x="1269.4" y="867.6" font-size="11" fill="#5c6cf4" text-anchor="middle" font-family="Liberation Sans, sans-serif">14.51</text><text x="1322.9" y="867.6" font-size="11" fill="#5c6cf4" text-anchor="middle" font-family="Liberation Sans, sans-serif">24.44</text><text x="1376.4" y="867.6" font-size="11" fill="#5c6cf4" text-anchor="middle" font-family="Liberation Sans, sans-serif">37.01</text><text x="1429.9" y="867.6" font-size="11" fill="#5c6cf4" text-anchor="middle" font-family="Liberation Sans, sans-serif">51.34</text><text x="1483.4" y="867.6" font-size="11" fill="#5c6cf4" text-anchor="middle" font-family="Liberation Sans, sans-serif">66.18</text><text x="1536.9" y="867.6" font-size="11" fill="#5c6cf4" text-anchor="middle" font-family="Liberation Sans, sans-serif">80.20</text><text x="1643.9" y="867.6" font-size="11" fill="#5c6cf4" text-anchor="middle" font-family="Liberation Sans, sans-serif">101.57</text><text x="1697.4" y="867.6" font-size="11" fill="#5c6cf4" text-anchor="middle" font-family="Liberation Sans, sans-serif">107.75</text><text x="1750.9" y="867.6" font-size="11" fill="#5c6cf4" text-anchor="middle" font-family="Liberation Sans, sans-serif">110.79</text><text x="1804.4" y="867.6" font-size="11" fill="#5c6cf4" text-anchor="middle" font-family="Liberation Sans, sans-serif">110.99</text><rect x="1144.8" y="887.5" width="43.4" height="2.1" fill="#5b7af8" stroke="#484848" stroke-width="0.9"/><rect x="1188.2" y="885.9" width="53.5" height="3.7" fill="#5b7af8" stroke="#484848" stroke-width="0.9"/><rect x="1241.7" y="883.9" width="53.5" height="5.7" fill="#5b7af8" stroke="#484848" stroke-width="0.9"/><rect x="1295.2" y="881.9" width="53.5" height="7.7" fill="#5b7af8" stroke="#484848" stroke-width="0.9"/><rect x="1348.7" y="880.4" width="53.5" height="9.2" fill="#5b7af8" stroke="#484848" stroke-width="0.9"/><rect x="1402.2" y="879.6" width="53.5" height="10.0" fill="#5b7af8" stroke="#484848" stroke-width="0.9"/><rect x="1455.7" y="879.7" width="53.5" height="9.9" fill="#5b7af8" stroke="#484848" stroke-width="0.9"/><rect x="1509.2" y="880.7" width="53.5" height="8.9" fill="#5b7af8" stroke="#484848" stroke-width="0.9"/><rect x="1562.7" y="882.3" width="53.5" height="7.3" fill="#5b7af8" stroke="#484848" stroke-width="0.9"/><rect x="1616.2" y="884.4" width="53.5" height="5.2" fill="#5b7af8" stroke="#484848" stroke-width="0.9"/><rect x="1669.7" y="886.5" width="53.5" height="3.1" fill="#5b7af8" stroke="#484848" stroke-width="0.9"/><rect x="1723.2" y="888.5" width="53.5" height="1.1" fill="#5b7af8" stroke="#484848" stroke-width="0.9"/><rect x="1776.7" y="889.6" width="76.3" height="0.7" fill="#f47c7c" stroke="#484848" stroke-width="0.9"/><line x1="1144.8" x2="1853" y1="889.6" y2="889.6" stroke="#484848" stroke-width="1.4"/><text x="1120" y="894.0" font-size="11" fill="#666" text-anchor="middle" font-family="Liberation Sans, sans-serif">Gamma</text><text x="1879.5" y="894.0" font-size="11" fill="#666" text-anchor="middle" font-family="Liberation Sans, sans-serif">Gamma</text><text x="1162.4" y="899.6" font-size="11" fill="#5c6cf4" text-anchor="middle" font-family="Liberation Sans, sans-serif">3.09</text><text x="1215.9" y="899.6" font-size="11" fill="#5c6cf4" text-anchor="middle" font-family="Liberation Sans, sans-serif">5.52</text><text x="1269.4" y="899.6" font-size="11" fill="#5c6cf4" text-anchor="middle" font-family="Liberation Sans, sans-serif">8.45</text><text x="1322.9" y="899.6" font-size="11" fill="#5c6cf4" text-anchor="middle" font-family="Liberation Sans, sans-serif">11.36</text><text x="1376.4" y="899.6" font-size="11" fill="#5c6cf4" text-anchor="middle" font-family="Liberation Sans, sans-serif">13.64</text><text x="1429.9" y="899.6" font-size="11" fill="#5c6cf4" text-anchor="middle" font-family="Liberation Sans, sans-serif">14.81</text><text x="1483.4" y="899.6" font-size="11" fill="#5c6cf4" text-anchor="middle" font-family="Liberation Sans, sans-serif">14.64</text><text x="1536.9" y="899.6" font-size="11" fill="#5c6cf4" text-anchor="middle" font-family="Liberation Sans, sans-serif">13.21</text><text x="1643.9" y="899.6" font-size="11" fill="#5c6cf4" text-anchor="middle" font-family="Liberation Sans, sans-serif">7.77</text><text x="1697.4" y="899.6" font-size="11" fill="#5c6cf4" text-anchor="middle" font-family="Liberation Sans, sans-serif">4.59</text><text x="1750.9" y="899.6" font-size="11" fill="#5c6cf4" text-anchor="middle" font-family="Liberation Sans, sans-serif">1.56</text><text x="1804.4" y="889.2" font-size="11" fill="#f46060" text-anchor="middle" font-family="Liberation Sans, sans-serif">-1.09</text><rect x="1188.2" y="921.8" width="53.5" height="0.7" fill="#f47c7c" stroke="#484848" stroke-width="0.9"/><rect x="1241.7" y="921.8" width="53.5" height="1.2" fill="#f47c7c" stroke="#484848" stroke-width="0.9"/><rect x="1295.2" y="921.8" width="53.5" height="1.9" fill="#f47c7c" stroke="#484848" stroke-width="0.9"/><rect x="1348.7" y="921.8" width="53.5" height="2.3" fill="#f47c7c" stroke="#484848" stroke-width="0.9"/><rect x="1402.2" y="921.8" width="53.5" height="2.4" fill="#f47c7c" stroke="#484848" stroke-width="0.9"/><rect x="1455.7" y="921.8" width="53.5" height="2.0" fill="#f47c7c" stroke="#484848" stroke-width="0.9"/><rect x="1509.2" y="921.8" width="53.5" height="0.9" fill="#f47c7c" stroke="#484848" stroke-width="0.9"/><rect x="1562.7" y="921.1" width="53.5" height="0.7" fill="#5b7af8" stroke="#484848" stroke-width="0.9"/><rect x="1616.2" y="919.0" width="53.5" height="2.8" fill="#5b7af8" stroke="#484848" stroke-width="0.9"/><rect x="1669.7" y="916.5" width="53.5" height="5.3" fill="#5b7af8" stroke="#484848" stroke-width="0.9"/><rect x="1723.2" y="914.0" width="53.5" height="7.8" fill="#5b7af8" stroke="#484848" stroke-width="0.9"/><rect x="1776.7" y="911.6" width="76.3" height="10.2" fill="#5b7af8" stroke="#484848" stroke-width="0.9"/><line x1="1144.8" x2="1853" y1="921.8" y2="921.8" stroke="#484848" stroke-width="1.4"/><text x="1120" y="926.2" font-size="11" fill="#666" text-anchor="middle" font-family="Liberation Sans, sans-serif">Theta</text><text x="1879.5" y="926.2" font-size="11" fill="#666" text-anchor="middle" font-family="Liberation Sans, sans-serif">Theta</text><text x="1162.4" y="921.4" font-size="11" fill="#f46060" text-anchor="middle" font-family="Liberation Sans, sans-serif">-0.86</text><text x="1215.9" y="921.4" font-size="11" fill="#f46060" text-anchor="middle" font-family="Liberation Sans, sans-serif">-2.17</text><text x="1269.4" y="921.4" font-size="11" fill="#f46060" text-anchor="middle" font-family="Liberation Sans, sans-serif">-4.00</text><text x="1322.9" y="921.4" font-size="11" fill="#f46060" text-anchor="middle" font-family="Liberation Sans, sans-serif">-5.98</text><text x="1376.4" y="921.4" font-size="11" fill="#f46060" text-anchor="middle" font-family="Liberation Sans, sans-serif">-7.48</text><text x="1429.9" y="921.4" font-size="11" fill="#f46060" text-anchor="middle" font-family="Liberation Sans, sans-serif">-7.80</text><text x="1483.4" y="921.4" font-size="11" fill="#f46060" text-anchor="middle" font-family="Liberation Sans, sans-serif">-6.39</text><text x="1536.9" y="921.4" font-size="11" fill="#f46060" text-anchor="middle" font-family="Liberation Sans, sans-serif">-2.99</text><text x="1643.9" y="931.8" font-size="11" fill="#5c6cf4" text-anchor="middle" font-family="Liberation Sans, sans-serif">9.17</text><text x="1697.4" y="931.8" font-size="11" fill="#5c6cf4" text-anchor="middle" font-family="Liberation Sans, sans-serif">16.96</text><text x="1750.9" y="931.8" font-size="11" fill="#5c6cf4" text-anchor="middle" font-family="Liberation Sans, sans-serif">25.08</text><text x="1804.4" y="931.8" font-size="11" fill="#5c6cf4" text-anchor="middle" font-family="Liberation Sans, sans-serif">32.98</text><rect x="1144.8" y="952.5" width="43.4" height="1.2" fill="#5b7af8" stroke="#484848" stroke-width="0.9"/><rect x="1188.2" y="951.3" width="53.5" height="2.4" fill="#5b7af8" stroke="#484848" stroke-width="0.9"/><rect x="1241.7" y="949.5" width="53.5" height="4.2" fill="#5b7af8" stroke="#484848" stroke-width="0.9"/><rect x="1295.2" y="947.5" width="53.5" height="6.2" fill="#5b7af8" stroke="#484848" stroke-width="0.9"/><rect x="1348.7" y="945.6" width="53.5" height="8.1" fill="#5b7af8" stroke="#484848" stroke-width="0.9"/><rect x="1402.2" y="944.4" width="53.5" height="9.3" fill="#5b7af8" stroke="#484848" stroke-width="0.9"/><rect x="1455.7" y="944.2" width="53.5" height="9.5" fill="#5b7af8" stroke="#484848" stroke-width="0.9"/><rect x="1509.2" y="945.3" width="53.5" height="8.4" fill="#5b7af8" stroke="#484848" stroke-width="0.9"/><rect x="1562.7" y="947.5" width="53.5" height="6.2" fill="#5b7af8" stroke="#484848" stroke-width="0.9"/><rect x="1616.2" y="950.8" width="53.5" height="2.9" fill="#5b7af8" stroke="#484848" stroke-width="0.9"/><rect x="1669.7" y="953.7" width="53.5" height="1.1" fill="#f47c7c" stroke="#484848" stroke-width="0.9"/><rect x="1723.2" y="953.7" width="53.5" height="5.3" fill="#f47c7c" stroke="#484848" stroke-width="0.9"/><rect x="1776.7" y="953.7" width="76.3" height="9.4" fill="#f47c7c" stroke="#484848" stroke-width="0.9"/><line x1="1144.8" x2="1853" y1="953.6999999999999" y2="953.6999999999999" stroke="#484848" stroke-width="1.4"/><text x="1120" y="958.1" font-size="11" fill="#666" text-anchor="middle" font-family="Liberation Sans, sans-serif">Vega</text><text x="1879.5" y="958.1" font-size="11" fill="#666" text-anchor="middle" font-family="Liberation Sans, sans-serif">Vega</text><text x="1162.4" y="963.7" font-size="11" fill="#5c6cf4" text-anchor="middle" font-family="Liberation Sans, sans-serif">0.16</text><text x="1215.9" y="963.7" font-size="11" fill="#5c6cf4" text-anchor="middle" font-family="Liberation Sans, sans-serif">0.34</text><text x="1269.4" y="963.7" font-size="11" fill="#5c6cf4" text-anchor="middle" font-family="Liberation Sans, sans-serif">0.58</text><text x="1322.9" y="963.7" font-size="11" fill="#5c6cf4" text-anchor="middle" font-family="Liberation Sans, sans-serif">0.86</text><text x="1376.4" y="963.7" font-size="11" fill="#5c6cf4" text-anchor="middle" font-family="Liberation Sans, sans-serif">1.12</text><text x="1429.9" y="963.7" font-size="11" fill="#5c6cf4" text-anchor="middle" font-family="Liberation Sans, sans-serif">1.29</text><text x="1483.4" y="963.7" font-size="11" fill="#5c6cf4" text-anchor="middle" font-family="Liberation Sans, sans-serif">1.32</text><text x="1536.9" y="963.7" font-size="11" fill="#5c6cf4" text-anchor="middle" font-family="Liberation Sans, sans-serif">1.17</text><text x="1643.9" y="963.7" font-size="11" fill="#5c6cf4" text-anchor="middle" font-family="Liberation Sans, sans-serif">0.40</text><text x="1697.4" y="953.3" font-size="11" fill="#f46060" text-anchor="middle" font-family="Liberation Sans, sans-serif">-0.15</text><text x="1750.9" y="953.3" font-size="11" fill="#f46060" text-anchor="middle" font-family="Liberation Sans, sans-serif">-0.73</text><text x="1804.4" y="953.3" font-size="11" fill="#f46060" text-anchor="middle" font-family="Liberation Sans, sans-serif">-1.31</text><rect x="1564.5" y="771.5" width="49" height="199.5" rx="5" fill="#eaf1f9" fill-opacity="0.86" stroke="#4f5f7a"/><text x="1589" y="783" font-size="11" fill="#222" text-anchor="middle" font-family="Liberation Sans, sans-serif">25.99</text><text x="1589.3" y="816" font-size="11" fill="#2020e0" stroke="#2020e0" stroke-width="0.3" text-anchor="middle" font-family="Liberation Sans, sans-serif">455</text><text x="1589.3" y="830.8" font-size="11" fill="#2020e0" stroke="#2020e0" stroke-width="0.3" text-anchor="middle" font-family="Liberation Sans, sans-serif">140.0%</text><text x="1589.3" y="862.8" font-size="11" fill="#2020e0" stroke="#2020e0" stroke-width="0.3" text-anchor="middle" font-family="Liberation Sans, sans-serif">92.15</text><text x="1589.3" y="894.8" font-size="11" fill="#2020e0" stroke="#2020e0" stroke-width="0.3" text-anchor="middle" font-family="Liberation Sans, sans-serif">10.81</text><text x="1589.3" y="926.8" font-size="11" fill="#2020e0" stroke="#2020e0" stroke-width="0.3" text-anchor="middle" font-family="Liberation Sans, sans-serif">2.27</text><text x="1589.3" y="958.8" font-size="11" fill="#2020e0" stroke="#2020e0" stroke-width="0.3" text-anchor="middle" font-family="Liberation Sans, sans-serif">0.86</text></svg>
<div class="b" style="left:1089px;top:976px;width:817px;height:25px;background:#293955;"></div>
<div class="b" style="left:10px;top:1001px;width:1900px;height:1px;background:#98a4ba;"></div>
<span class="t" style="left:1734px;top:982px;line-height:14px;color:#fff;">59%</span>
<div class="b" style="left:1770px;top:988px;width:7px;height:1px;background:#dfe3ee;"></div>
<div class="b" style="left:1784px;top:988px;width:19px;height:1px;background:#fbefb0;"></div>
<div class="b" style="left:1806px;top:988px;width:75px;height:1px;background:#dfe3ee;"></div>
<div class="b" style="left:1803px;top:984px;width:3px;height:9px;background:#fbefb0;"></div>
<div class="b" style="left:1832px;top:985px;width:1px;height:7px;background:#dfe3ee;"></div>
<div class="b" style="left:1888px;top:988px;width:7px;height:1px;background:#dfe3ee;"></div>
<div class="b" style="left:1891px;top:985px;width:1px;height:7px;background:#dfe3ee;"></div>
<div id="frame"></div></div></body></html>
